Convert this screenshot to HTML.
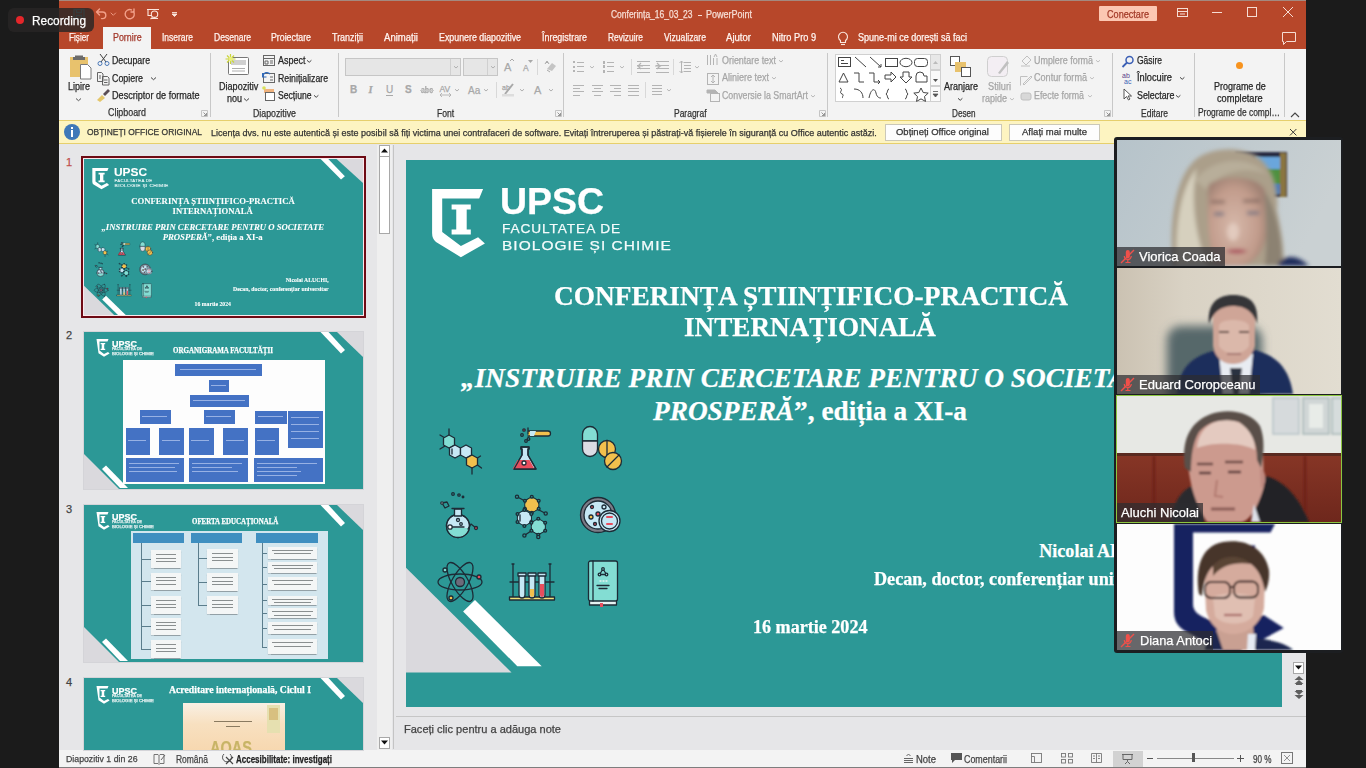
<!DOCTYPE html>
<html><head><meta charset="utf-8">
<style>
*{margin:0;padding:0;box-sizing:border-box}
html,body{width:1366px;height:768px;overflow:hidden;background:#1b1b1b;font-family:"Liberation Sans",sans-serif;position:relative}
.a{position:absolute}
.t{position:absolute;white-space:nowrap;line-height:1;-webkit-text-stroke:0.25px currentColor}
</style></head><body>
<div class="a" style="left:59px;top:0px;width:1247px;height:768px;background:#e6e6e8;"></div>
<div class="a" style="left:59px;top:0px;width:1247px;height:49px;background:#b7472a;"></div>
<div class="a" style="left:59px;top:0px;width:1247px;height:1px;background:#a4897f;"></div>
<svg class="a" style="left:59px;top:0" width="140" height="27" viewBox="0 0 140 27">
      <g fill="none" stroke="#6fa0a0" stroke-width="1.3"><rect x="15" y="9.5" width="10" height="9"/><path d="M17.5 9.5 v3 h5 v-3 M17.5 18.5 v-3 h5 v3"/></g>
      <g fill="none" stroke="#f2a08a" stroke-width="1.4" stroke-linecap="round">
        <path d="M37.5 12 l3 -3 M37.5 12 l3 3 M37.5 12 h6 a3.3 3.3 0 0 1 0 6.6 h-1"/>
        <path d="M52 13 l2.3 2.3 l2.3 -2.3" stroke-width="0.9"/>
        <path d="M74.5 11.5 a4.6 4.6 0 1 1 -2 -1.6 M75 9 v3 h-3"/>
      </g>
      <g fill="none" stroke="#fbe6dd" stroke-width="1.1">
        <path d="M88 9.5 h12 M89 9.5 v6 h3"/><circle cx="95.5" cy="14.2" r="3.2"/><path d="M92 18.5 h7 M93.5 17.5 l-2 1.5"/>
      </g>
      <path d="M113 12.5 h5 M113 14 l2.5 2.5 l2.5 -2.5 z" stroke="#fbe6dd" fill="#fbe6dd" stroke-width="0.9"/>
    </svg>
<div class="t" style="left:611.00px;top:10.13px;font-size:10px;color:#f6ddd4;font-family:'Liberation Sans',sans-serif;transform:scaleX(0.8472);transform-origin:0 0;">Conferința_16_03_23</div>
<div class="a" style="left:697.5px;top:14.5px;width:4px;height:1px;background:#f6ddd4;"></div>
<div class="t" style="left:705.70px;top:10.13px;font-size:10px;color:#f6ddd4;font-family:'Liberation Sans',sans-serif;transform:scaleX(0.8995);transform-origin:0 0;">PowerPoint</div>
<div class="a" style="left:1099px;top:6px;width:58px;height:15px;background:#fcc7b2;border-radius:1px"></div>
<div class="t" style="left:1107.00px;top:9.54px;font-size:10px;color:#a33a28;font-family:'Liberation Sans',sans-serif;transform:scaleX(0.9103);transform-origin:0 0;">Conectare</div>
<svg class="a" style="left:1160px;top:0" width="146" height="49" viewBox="0 0 146 49">
      <g fill="none" stroke="#f6ddd4" stroke-width="1">
        <rect x="17.5" y="8.5" width="10" height="8"/><path d="M17.5 11.5 h10 M20 14 h5"/>
        <path d="M52 12.5 h10"/>
        <rect x="87.5" y="7.5" width="9" height="9"/>
        <path d="M123 7 l10 10 M133 7 l-10 10"/>
        <path d="M122.5 32.5 h13 v9 h-9 l-3 3 v-3 h-1 z"/>
      </g>
    </svg>
<div class="a" style="left:103px;top:27px;width:48px;height:22px;background:#f3f3f3;"></div>
<div class="t" style="left:112.80px;top:33.14px;font-size:10px;color:#a3382a;font-family:'Liberation Sans',sans-serif;transform:scaleX(0.8871);transform-origin:0 0;">Pornire</div>
<div class="t" style="left:69.00px;top:33.14px;font-size:10px;color:#fff4f0;font-family:'Liberation Sans',sans-serif;transform:scaleX(0.8182);transform-origin:0 0;">Fișier</div>
<div class="t" style="left:162.00px;top:33.14px;font-size:10px;color:#fff4f0;font-family:'Liberation Sans',sans-serif;transform:scaleX(0.8450);transform-origin:0 0;">Inserare</div>
<div class="t" style="left:214.00px;top:33.14px;font-size:10px;color:#fff4f0;font-family:'Liberation Sans',sans-serif;transform:scaleX(0.8533);transform-origin:0 0;">Desenare</div>
<div class="t" style="left:271.00px;top:33.14px;font-size:10px;color:#fff4f0;font-family:'Liberation Sans',sans-serif;transform:scaleX(0.8776);transform-origin:0 0;">Proiectare</div>
<div class="t" style="left:332.00px;top:33.14px;font-size:10px;color:#fff4f0;font-family:'Liberation Sans',sans-serif;transform:scaleX(0.8950);transform-origin:0 0;">Tranziții</div>
<div class="t" style="left:384.00px;top:33.14px;font-size:10px;color:#fff4f0;font-family:'Liberation Sans',sans-serif;transform:scaleX(0.9559);transform-origin:0 0;">Animații</div>
<div class="t" style="left:439.00px;top:33.14px;font-size:10px;color:#fff4f0;font-family:'Liberation Sans',sans-serif;transform:scaleX(0.8832);transform-origin:0 0;">Expunere diapozitive</div>
<div class="t" style="left:542.00px;top:33.14px;font-size:10px;color:#fff4f0;font-family:'Liberation Sans',sans-serif;transform:scaleX(0.8897);transform-origin:0 0;">Înregistrare</div>
<div class="t" style="left:608.00px;top:33.14px;font-size:10px;color:#fff4f0;font-family:'Liberation Sans',sans-serif;transform:scaleX(0.8397);transform-origin:0 0;">Revizuire</div>
<div class="t" style="left:664.00px;top:33.14px;font-size:10px;color:#fff4f0;font-family:'Liberation Sans',sans-serif;transform:scaleX(0.8618);transform-origin:0 0;">Vizualizare</div>
<div class="t" style="left:726.00px;top:33.14px;font-size:10px;color:#fff4f0;font-family:'Liberation Sans',sans-serif;transform:scaleX(0.9570);transform-origin:0 0;">Ajutor</div>
<div class="t" style="left:772.00px;top:33.14px;font-size:10px;color:#fff4f0;font-family:'Liberation Sans',sans-serif;transform:scaleX(0.9206);transform-origin:0 0;">Nitro Pro 9</div>
<div class="t" style="left:858.00px;top:33.14px;font-size:10px;color:#fff4f0;font-family:'Liberation Sans',sans-serif;transform:scaleX(0.9037);transform-origin:0 0;">Spune-mi ce dorești să faci</div>
<svg class="a" style="left:836px;top:30px" width="14" height="16" viewBox="0 0 14 16"><g fill="none" stroke="#fbe6dd" stroke-width="1.1">
      <path d="M4.5 10.5 a4.5 4.5 0 1 1 5 0 v2 h-5 z"/><path d="M5 14.5 h4"/></g></svg>
<div class="a" style="left:59px;top:49px;width:1247px;height:71px;background:#f3f3f3;"></div>
<div class="a" style="left:210px;top:53px;width:1px;height:64px;background:#c8c8c8;"></div>
<div class="a" style="left:338px;top:53px;width:1px;height:64px;background:#c8c8c8;"></div>
<div class="a" style="left:563px;top:53px;width:1px;height:64px;background:#c8c8c8;"></div>
<div class="a" style="left:827px;top:53px;width:1px;height:64px;background:#c8c8c8;"></div>
<div class="a" style="left:1112px;top:53px;width:1px;height:64px;background:#c8c8c8;"></div>
<div class="a" style="left:1194px;top:53px;width:1px;height:64px;background:#c8c8c8;"></div>
<div class="a" style="left:1284px;top:53px;width:1px;height:64px;background:#c8c8c8;"></div>
<div class="a" style="left:59px;top:120px;width:1247px;height:24px;background:#fdf4c1;"></div>
<div class="a" style="left:59px;top:120px;width:1247px;height:1px;background:#e6cf6c;"></div>
<div class="a" style="left:59px;top:143px;width:1247px;height:1px;background:#e6cf6c;"></div>
<div class="a" style="left:59px;top:750px;width:1247px;height:17px;background:#f3f3f3;"></div>
<div class="a" style="left:59px;top:767px;width:1247px;height:1px;background:#7d7d7d;"></div>
<svg class="a" style="left:66px;top:54px" width="30" height="28" viewBox="0 0 30 28">
      <rect x="4" y="3" width="18" height="20" fill="#e8c26d"/>
      <path d="M9 3 v-1.5 h8 v1.5 h2 v3 h-12 v-3z" fill="#6b6b6b"/>
      <path d="M14.5 10.5 h7 l3.5 3.5 v11 h-10.5 z" fill="#fff" stroke="#7a7a7a" stroke-width="1"/>
    </svg>
<div class="t" style="left:67.50px;top:81.73px;font-size:10px;color:#262626;font-family:'Liberation Sans',sans-serif;transform:scaleX(0.8995);transform-origin:0 0;">Lipire</div>
<svg class="a" style="left:74.5px;top:96.5px" width="7.0" height="5.0" viewBox="0 0 7.0 5.0"><path d="M1 1.5 l2.5 2.2 l2.5 -2.2" fill="none" stroke="#555" stroke-width="1"/></svg>
<svg class="a" style="left:96px;top:53px" width="16" height="50" viewBox="0 0 16 50">
      <g fill="none" stroke="#3e3e3e" stroke-width="1"><path d="M4 1 l6 8 M11 1 l-6 8"/></g>
      <g fill="none" stroke="#4a78b8" stroke-width="1"><circle cx="4" cy="10.5" r="2"/><circle cx="11" cy="10.5" r="2"/></g>
      <g fill="none" stroke="#555" stroke-width="0.9"><path d="M1.5 19.5 h4 l1.5 1.5 v7.5 h-5.5z M3 23 h2 M3 25 h2"/><path d="M6.5 23.5 h5 l1.5 1.5 v7 h-6.5z M8 27 h3.5 M8 29.5 h3.5"/></g>
      <path d="M1 47 l5 -5 l3 3 l-5 4z" fill="#e4c66a"/><path d="M7 41 l5 -5 l2 2 l-5 5z" fill="#5a4e56"/>
    </svg>
<div class="t" style="left:112.00px;top:55.94px;font-size:10px;color:#262626;font-family:'Liberation Sans',sans-serif;transform:scaleX(0.8764);transform-origin:0 0;">Decupare</div>
<div class="t" style="left:112.00px;top:73.53px;font-size:10px;color:#262626;font-family:'Liberation Sans',sans-serif;transform:scaleX(0.8852);transform-origin:0 0;">Copiere</div>
<svg class="a" style="left:149.5px;top:75.5px" width="7.0" height="5.0" viewBox="0 0 7.0 5.0"><path d="M1 1.5 l2.5 2.2 l2.5 -2.2" fill="none" stroke="#444" stroke-width="1"/></svg>
<div class="t" style="left:112.00px;top:90.73px;font-size:10px;color:#262626;font-family:'Liberation Sans',sans-serif;transform:scaleX(0.9100);transform-origin:0 0;">Descriptor de formate</div>
<div class="t" style="left:108.20px;top:108.23px;font-size:10px;color:#333;font-family:'Liberation Sans',sans-serif;transform:scaleX(0.8878);transform-origin:0 0;">Clipboard</div>
<svg class="a" style="left:201px;top:110px" width="7" height="7" viewBox="0 0 7 7"><path d="M0.5 6.5 v-6 h6 v6 z" fill="none" stroke="#c4c4c4" stroke-width="1"/><path d="M2.5 2.5 l3 3 M3 5.5 h2.5 v-2.5" fill="none" stroke="#8a8a8a" stroke-width="0.9"/></svg>
<svg class="a" style="left:224px;top:53px" width="30" height="25" viewBox="0 0 30 25">
      <rect x="4.5" y="4.5" width="20" height="17" rx="1" fill="#fff" stroke="#777" stroke-width="1"/>
      <rect x="7" y="7" width="15" height="5" fill="#d0d0d0"/>
      <path d="M8 15.5 h13 M8 18 h13" stroke="#999" stroke-width="0.8"/>
      <g stroke="#c9d43a" stroke-width="1.2"><path d="M6.5 1 v10 M1.5 6 h10 M3 2.5 l7 7 M10 2.5 l-7 7"/></g>
      <circle cx="6.5" cy="6" r="2.3" fill="#eaf07a"/>
    </svg>
<div class="t" style="left:218.80px;top:81.53px;font-size:10px;color:#262626;font-family:'Liberation Sans',sans-serif;transform:scaleX(0.9066);transform-origin:0 0;">Diapozitiv</div>
<div class="t" style="left:227.00px;top:93.73px;font-size:10px;color:#262626;font-family:'Liberation Sans',sans-serif;transform:scaleX(0.8990);transform-origin:0 0;">nou</div>
<svg class="a" style="left:242.5px;top:96.5px" width="7.0" height="5.0" viewBox="0 0 7.0 5.0"><path d="M1 1.5 l2.5 2.2 l2.5 -2.2" fill="none" stroke="#444" stroke-width="1"/></svg>
<svg class="a" style="left:262px;top:54px" width="15" height="50" viewBox="0 0 15 50">
      <g fill="none" stroke="#666" stroke-width="1"><rect x="1.5" y="1.5" width="11" height="10"/><path d="M1.5 4.5 h11 M3 7 h3 v3 h-3z M8 7 h3 M8 9 h3"/></g>
      <g fill="none" stroke="#666" stroke-width="1"><rect x="1.5" y="19.5" width="11" height="9"/><path d="M8 23 h3 M8 26 h3"/></g>
      <path d="M1 22 a4 4 0 0 1 7 -2" fill="none" stroke="#2f6bbf" stroke-width="1.3"/><path d="M0.5 19 v4 h4" fill="none" stroke="#2f6bbf" stroke-width="1.2"/>
      <rect x="2" y="35" width="10" height="4" fill="#f0b37e"/><rect x="3.5" y="38.5" width="9" height="8" fill="#fff" stroke="#666" stroke-width="1"/>
      <circle cx="2" cy="34" r="1.8" fill="#d8e05a"/>
    </svg>
<div class="t" style="left:277.60px;top:55.94px;font-size:10px;color:#262626;font-family:'Liberation Sans',sans-serif;transform:scaleX(0.8995);transform-origin:0 0;">Aspect</div>
<svg class="a" style="left:305.8px;top:58.8px" width="6.4" height="4.4" viewBox="0 0 6.4 4.4"><path d="M1 1.3 l2.2 2.0 l2.2 -2.0" fill="none" stroke="#444" stroke-width="1"/></svg>
<div class="t" style="left:277.60px;top:73.73px;font-size:10px;color:#262626;font-family:'Liberation Sans',sans-serif;transform:scaleX(0.8734);transform-origin:0 0;">Reinițializare</div>
<div class="t" style="left:277.60px;top:90.84px;font-size:10px;color:#262626;font-family:'Liberation Sans',sans-serif;transform:scaleX(0.8608);transform-origin:0 0;">Secțiune</div>
<svg class="a" style="left:312.8px;top:93.8px" width="6.4" height="4.4" viewBox="0 0 6.4 4.4"><path d="M1 1.3 l2.2 2.0 l2.2 -2.0" fill="none" stroke="#444" stroke-width="1"/></svg>
<div class="t" style="left:253.20px;top:108.53px;font-size:10px;color:#333;font-family:'Liberation Sans',sans-serif;transform:scaleX(0.8791);transform-origin:0 0;">Diapozitive</div>
<div class="a" style="left:345px;top:58px;width:116px;height:18px;background:#e6e6e6;border:1px solid #c6c6c6"></div>
<div class="a" style="left:450px;top:59px;width:1px;height:16px;background:#d0d0d0;"></div>
<svg class="a" style="left:452.5px;top:65px" width="6" height="4" viewBox="0 0 6 4"><path d="M1 1.2 l2 1.8 l2 -1.8" fill="none" stroke="#b0b0b0" stroke-width="1"/></svg>
<div class="a" style="left:463px;top:58px;width:35px;height:18px;background:#e6e6e6;border:1px solid #c6c6c6"></div>
<div class="a" style="left:487px;top:59px;width:1px;height:16px;background:#d0d0d0;"></div>
<svg class="a" style="left:489.5px;top:65px" width="6" height="4" viewBox="0 0 6 4"><path d="M1 1.2 l2 1.8 l2 -1.8" fill="none" stroke="#b0b0b0" stroke-width="1"/></svg>
<div class="t" style="left:504.00px;top:62.09px;font-size:11px;color:#a8a8a8;font-family:'Liberation Sans',sans-serif;">A</div>
<div class="t" style="left:523.00px;top:64.20px;font-size:8.5px;color:#a8a8a8;font-family:'Liberation Sans',sans-serif;">A</div>
<svg class="a" style="left:510px;top:58px" width="4" height="4"><path d="M0 3 l2 -2 l2 2" fill="none" stroke="#a8a8a8" stroke-width="1"/></svg>
<svg class="a" style="left:528px;top:60px" width="5" height="4"><path d="M0 0 h5 l-2.5 3z" fill="#a8a8a8"/></svg>
<div class="a" style="left:537px;top:59px;width:1px;height:16px;background:#d8d8d8;"></div>
<svg class="a" style="left:544px;top:60px" width="13" height="13" viewBox="0 0 13 13"><path d="M3 9 l5 -6 l4 3 l-4 5z" fill="#c4c4c4"/><path d="M1 4 l2 -3 l2 3 M2 2.5 h2" fill="none" stroke="#a8a8a8" stroke-width="1"/><path d="M3 10 l3 2" stroke="#a8a8a8"/></svg>
<div class="t" style="left:350.00px;top:84.94px;font-size:10px;color:#a8a8a8;font-family:'Liberation Sans',sans-serif;font-weight:bold;">B</div>
<div class="t" style="left:368.50px;top:84.61px;font-size:10.5px;color:#a8a8a8;font-family:'Liberation Serif',serif;font-weight:bold;font-style:italic;">I</div>
<div class="t" style="left:386.00px;top:84.94px;font-size:10px;color:#a8a8a8;font-family:'Liberation Sans',sans-serif;">U</div>
<div class="a" style="left:386px;top:94.5px;width:7px;height:1px;background:#a8a8a8;"></div>
<div class="t" style="left:405.00px;top:84.94px;font-size:10px;color:#a8a8a8;font-family:'Liberation Sans',sans-serif;font-weight:bold;">S</div>
<div class="t" style="left:421.00px;top:86.20px;font-size:8.5px;color:#a8a8a8;font-family:'Liberation Sans',sans-serif;font-weight:bold;transform:scaleX(0.8193);transform-origin:0 0;">abc</div>
<div class="a" style="left:420px;top:90px;width:14px;height:1px;background:#c8c8c8;"></div>
<div class="t" style="left:439.50px;top:85.20px;font-size:8.5px;color:#a8a8a8;font-family:'Liberation Sans',sans-serif;">AV</div>
<svg class="a" style="left:439px;top:92px" width="13" height="6" viewBox="0 0 13 6"><path d="M1 3 h11 M1 3 l2 -2 M1 3 l2 2 M12 3 l-2 -2 M12 3 l-2 2" fill="none" stroke="#a8a8a8" stroke-width="0.8"/></svg>
<svg class="a" style="left:454px;top:88px" width="6" height="4" viewBox="0 0 6 4"><path d="M1 1.2 l2 1.8 l2 -1.8" fill="none" stroke="#b0b0b0" stroke-width="1"/></svg>
<div class="t" style="left:468.00px;top:85.94px;font-size:10px;color:#a8a8a8;font-family:'Liberation Sans',sans-serif;">Aa</div>
<svg class="a" style="left:483px;top:88px" width="6" height="4" viewBox="0 0 6 4"><path d="M1 1.2 l2 1.8 l2 -1.8" fill="none" stroke="#b0b0b0" stroke-width="1"/></svg>
<div class="a" style="left:496px;top:82px;width:1px;height:16px;background:#d8d8d8;"></div>
<div class="t" style="left:502.00px;top:84.47px;font-size:7px;color:#a8a8a8;font-family:'Liberation Sans',sans-serif;">ab</div>
<svg class="a" style="left:501px;top:83px" width="15" height="14" viewBox="0 0 15 14"><path d="M4 11 l8 -10" stroke="#a8a8a8" stroke-width="2"/><rect x="1" y="11" width="12" height="2.5" fill="#ddd"/></svg>
<svg class="a" style="left:519px;top:88px" width="6" height="4" viewBox="0 0 6 4"><path d="M1 1.2 l2 1.8 l2 -1.8" fill="none" stroke="#b0b0b0" stroke-width="1"/></svg>
<div class="t" style="left:534.00px;top:85.09px;font-size:11px;color:#a8a8a8;font-family:'Liberation Sans',sans-serif;">A</div>
<svg class="a" style="left:548px;top:88px" width="6" height="4" viewBox="0 0 6 4"><path d="M1 1.2 l2 1.8 l2 -1.8" fill="none" stroke="#b0b0b0" stroke-width="1"/></svg>
<div class="t" style="left:436.60px;top:108.53px;font-size:10px;color:#333;font-family:'Liberation Sans',sans-serif;transform:scaleX(0.8596);transform-origin:0 0;">Font</div>
<svg class="a" style="left:555px;top:110px" width="7" height="7" viewBox="0 0 7 7"><path d="M0.5 6.5 v-6 h6 v6 z" fill="none" stroke="#c4c4c4" stroke-width="1"/><path d="M2.5 2.5 l3 3 M3 5.5 h2.5 v-2.5" fill="none" stroke="#8a8a8a" stroke-width="0.9"/></svg>
<div class="a" style="left:577px;top:61.5px;width:7px;height:1px;background:#b4b4b4;"></div><div class="a" style="left:577px;top:66.0px;width:7px;height:1px;background:#b4b4b4;"></div><div class="a" style="left:577px;top:70.5px;width:7px;height:1px;background:#b4b4b4;"></div>
<div class="a" style="left:573px;top:61.0px;width:2px;height:2px;background:#b4b4b4;"></div><div class="a" style="left:573px;top:65.5px;width:2px;height:2px;background:#b4b4b4;"></div><div class="a" style="left:573px;top:70.0px;width:2px;height:2px;background:#b4b4b4;"></div>
<svg class="a" style="left:589px;top:65px" width="6" height="4" viewBox="0 0 6 4"><path d="M1 1.2 l2 1.8 l2 -1.8" fill="none" stroke="#b8b8b8" stroke-width="1"/></svg>
<div class="a" style="left:607px;top:61.5px;width:7px;height:1px;background:#b4b4b4;"></div><div class="a" style="left:607px;top:66.0px;width:7px;height:1px;background:#b4b4b4;"></div><div class="a" style="left:607px;top:70.5px;width:7px;height:1px;background:#b4b4b4;"></div>
<div class="a" style="left:603px;top:60.5px;width:2px;height:3px;background:#b4b4b4;"></div><div class="a" style="left:603px;top:65.0px;width:2px;height:3px;background:#b4b4b4;"></div><div class="a" style="left:603px;top:69.5px;width:2px;height:3px;background:#b4b4b4;"></div>
<svg class="a" style="left:619px;top:65px" width="6" height="4" viewBox="0 0 6 4"><path d="M1 1.2 l2 1.8 l2 -1.8" fill="none" stroke="#b8b8b8" stroke-width="1"/></svg>
<div class="a" style="left:631px;top:59px;width:1px;height:16px;background:#d8d8d8;"></div>
<div class="a" style="left:637px;top:61.0px;width:13px;height:1px;background:#b4b4b4;"></div><div class="a" style="left:637px;top:64.7px;width:13px;height:1px;background:#b4b4b4;"></div><div class="a" style="left:637px;top:68.4px;width:13px;height:1px;background:#b4b4b4;"></div><div class="a" style="left:637px;top:72.1px;width:13px;height:1px;background:#b4b4b4;"></div>
<svg class="a" style="left:637px;top:62px" width="7" height="8"><path d="M6 4 h-5 l3 -3 M1 4 l3 3" fill="none" stroke="#b4b4b4" stroke-width="1.2"/></svg>
<div class="a" style="left:656px;top:61.0px;width:13px;height:1px;background:#b4b4b4;"></div><div class="a" style="left:656px;top:64.7px;width:13px;height:1px;background:#b4b4b4;"></div><div class="a" style="left:656px;top:68.4px;width:13px;height:1px;background:#b4b4b4;"></div><div class="a" style="left:656px;top:72.1px;width:13px;height:1px;background:#b4b4b4;"></div>
<svg class="a" style="left:655px;top:62px" width="7" height="8"><path d="M0 4 h5 l-3 -3 M5 4 l-3 3" fill="none" stroke="#b4b4b4" stroke-width="1.2"/></svg>
<div class="a" style="left:673px;top:59px;width:1px;height:16px;background:#d8d8d8;"></div>
<div class="a" style="left:684px;top:62px;width:7px;height:1px;background:#b4b4b4;"></div><div class="a" style="left:684px;top:65px;width:7px;height:1px;background:#b4b4b4;"></div><div class="a" style="left:684px;top:68px;width:7px;height:1px;background:#b4b4b4;"></div><div class="a" style="left:684px;top:71px;width:7px;height:1px;background:#b4b4b4;"></div>
<svg class="a" style="left:679px;top:60px" width="5" height="14"><path d="M2.5 1 v12 M0.5 3 l2 -2 l2 2 M0.5 11 l2 2 l2 -2" fill="none" stroke="#b4b4b4" stroke-width="1"/></svg>
<svg class="a" style="left:694px;top:65px" width="6" height="4" viewBox="0 0 6 4"><path d="M1 1.2 l2 1.8 l2 -1.8" fill="none" stroke="#b8b8b8" stroke-width="1"/></svg>
<div class="a" style="left:573px;top:85.0px;width:11px;height:1px;background:#b4b4b4;"></div>
<div class="a" style="left:573px;top:88.2px;width:7px;height:1px;background:#b4b4b4;"></div>
<div class="a" style="left:573px;top:91.4px;width:11px;height:1px;background:#b4b4b4;"></div>
<div class="a" style="left:573px;top:94.6px;width:7px;height:1px;background:#b4b4b4;"></div>
<div class="a" style="left:592.0px;top:85.0px;width:11px;height:1px;background:#b4b4b4;"></div>
<div class="a" style="left:594.0px;top:88.2px;width:7px;height:1px;background:#b4b4b4;"></div>
<div class="a" style="left:592.0px;top:91.4px;width:11px;height:1px;background:#b4b4b4;"></div>
<div class="a" style="left:594.0px;top:94.6px;width:7px;height:1px;background:#b4b4b4;"></div>
<div class="a" style="left:610px;top:85.0px;width:11px;height:1px;background:#b4b4b4;"></div>
<div class="a" style="left:614px;top:88.2px;width:7px;height:1px;background:#b4b4b4;"></div>
<div class="a" style="left:610px;top:91.4px;width:11px;height:1px;background:#b4b4b4;"></div>
<div class="a" style="left:614px;top:94.6px;width:7px;height:1px;background:#b4b4b4;"></div>
<div class="a" style="left:628px;top:85.0px;width:11px;height:1px;background:#b4b4b4;"></div>
<div class="a" style="left:628px;top:88.2px;width:11px;height:1px;background:#b4b4b4;"></div>
<div class="a" style="left:628px;top:91.4px;width:11px;height:1px;background:#b4b4b4;"></div>
<div class="a" style="left:628px;top:94.6px;width:11px;height:1px;background:#b4b4b4;"></div>
<div class="a" style="left:645px;top:82px;width:1px;height:16px;background:#d8d8d8;"></div>
<div class="a" style="left:652px;top:85px;width:10px;height:1px;background:#b4b4b4;"></div><div class="a" style="left:652px;top:88px;width:10px;height:1px;background:#b4b4b4;"></div><div class="a" style="left:652px;top:91px;width:10px;height:1px;background:#b4b4b4;"></div><div class="a" style="left:652px;top:94px;width:10px;height:1px;background:#b4b4b4;"></div>
<svg class="a" style="left:666px;top:88px" width="6" height="4" viewBox="0 0 6 4"><path d="M1 1.2 l2 1.8 l2 -1.8" fill="none" stroke="#b8b8b8" stroke-width="1"/></svg>
<div class="t" style="left:673.80px;top:108.53px;font-size:10px;color:#333;font-family:'Liberation Sans',sans-serif;transform:scaleX(0.8473);transform-origin:0 0;">Paragraf</div>
<svg class="a" style="left:819px;top:110px" width="7" height="7" viewBox="0 0 7 7"><path d="M0.5 6.5 v-6 h6 v6 z" fill="none" stroke="#c4c4c4" stroke-width="1"/><path d="M2.5 2.5 l3 3 M3 5.5 h2.5 v-2.5" fill="none" stroke="#8a8a8a" stroke-width="0.9"/></svg>
<svg class="a" style="left:706px;top:54px" width="14" height="50" viewBox="0 0 14 50"><g fill="none" stroke="#b4b4b4" stroke-width="1">
      <path d="M1.5 1 v10 M4.5 1 v10 M7.5 4 v7 M11 4 v7 M8 3 l1.5 -3 l1.5 3"/>
      <rect x="1.5" y="19.5" width="11" height="11"/><path d="M7 21 v8 M5 23 l2 -2 l2 2 M5 27 l2 2 l2 -2"/>
      <path d="M1 36 h8 l3 3 h-11z" fill="#b4b4b4"/><rect x="4.5" y="39.5" width="9" height="8"/></g></svg>
<div class="t" style="left:721.60px;top:55.53px;font-size:10px;color:#a6a6a6;font-family:'Liberation Sans',sans-serif;transform:scaleX(0.8914);transform-origin:0 0;">Orientare text</div>
<svg class="a" style="left:778px;top:59px" width="6" height="4" viewBox="0 0 6 4"><path d="M1 1.2 l2 1.8 l2 -1.8" fill="none" stroke="#b8b8b8" stroke-width="1"/></svg>
<div class="t" style="left:721.60px;top:73.14px;font-size:10px;color:#a6a6a6;font-family:'Liberation Sans',sans-serif;transform:scaleX(0.8996);transform-origin:0 0;">Aliniere text</div>
<svg class="a" style="left:771px;top:76px" width="6" height="4" viewBox="0 0 6 4"><path d="M1 1.2 l2 1.8 l2 -1.8" fill="none" stroke="#b8b8b8" stroke-width="1"/></svg>
<div class="t" style="left:721.60px;top:90.84px;font-size:10px;color:#a6a6a6;font-family:'Liberation Sans',sans-serif;transform:scaleX(0.8792);transform-origin:0 0;">Conversie la SmartArt</div>
<svg class="a" style="left:810px;top:94px" width="6" height="4" viewBox="0 0 6 4"><path d="M1 1.2 l2 1.8 l2 -1.8" fill="none" stroke="#b8b8b8" stroke-width="1"/></svg>
<div class="a" style="left:835px;top:54px;width:106px;height:48px;background:#ffffff;border:1px solid #d0d0d0"></div>
<div class="a" style="left:930px;top:54px;width:11px;height:16px;background:#e8e8e8;border:1px solid #d0d0d0"></div>
<div class="a" style="left:930px;top:70px;width:11px;height:16px;background:#fafafa;border:1px solid #d0d0d0"></div>
<div class="a" style="left:930px;top:86px;width:11px;height:16px;background:#fafafa;border:1px solid #d0d0d0"></div>
<svg class="a" style="left:835px;top:54px" width="106" height="48" viewBox="0 0 106 48">
      <g fill="none" stroke="#444" stroke-width="1">
        <rect x="3.5" y="3.5" width="12" height="9"/><path d="M6 6.5 h3 M6 9.5 h7"/>
        <path d="M20 3 l11 10"/><path d="M35 3 l11 10 M46 13 v-3 M46 13 h-3"/>
        <rect x="50.5" y="4.5" width="12" height="8"/>
        <ellipse cx="71" cy="8.5" rx="6" ry="4.2"/>
        <rect x="79.5" y="4.5" width="13" height="8" rx="3"/>
        <path d="M4 28 l4.5 -9 l4.5 9z"/>
        <path d="M19 19 h5 v9 h5"/><path d="M34 19 h5 v9 h6 M43 26 l2 2 l-2 2"/>
        <path d="M50 21 h6 v-3 l5 5 l-5 5 v-3 h-6z"/>
        <path d="M68 18 h6 v5 h3 l-6 6 l-6 -6 h3z"/>
        <path d="M81 28 v-6 a4 4 0 0 1 8 0 h3 v6z"/>
        <path d="M5 34 c4 2 -2 4 2 6 c3 1 -1 3 1 4"/>
        <path d="M19 35 c6 0 9 4 9 9"/><path d="M34 44 c2 -10 6 -10 7 -5 c1 5 4 5 5 5"/>
        <path d="M54 35 c-2 0 -1 4 -3 5 c2 1 1 5 3 5"/><path d="M70 35 c2 0 1 4 3 5 c-2 1 -1 5 -3 5"/>
        <path d="M86 34 l2.2 4.5 l5 0.6 l-3.7 3.4 l1 4.9 l-4.5 -2.5 l-4.5 2.5 l1 -4.9 l-3.7 -3.4 l5 -0.6z"/>
      </g></svg>
<svg class="a" style="left:930px;top:54px" width="11" height="48" viewBox="0 0 11 48"><path d="M3 10 l2.5 -3 l2.5 3z" fill="#bbb"/><path d="M3 25 l2.5 3 l2.5 -3z" fill="#555"/><path d="M3 37.5 h5 M3 40 l2.5 3 l2.5 -3z" stroke="#555" fill="#555" stroke-width="0.8"/></svg>
<svg class="a" style="left:948px;top:54px" width="26" height="24" viewBox="0 0 26 24">
      <rect x="2.5" y="2.5" width="9" height="9" fill="#fff" stroke="#555"/>
      <rect x="7" y="8" width="11" height="10" fill="#e8c26d"/>
      <rect x="13.5" y="13.5" width="9" height="9" fill="#fff" stroke="#555"/>
    </svg>
<div class="t" style="left:944.00px;top:82.03px;font-size:10px;color:#262626;font-family:'Liberation Sans',sans-serif;transform:scaleX(0.8995);transform-origin:0 0;">Aranjare</div>
<svg class="a" style="left:957.3px;top:96.8px" width="6.4" height="4.4" viewBox="0 0 6.4 4.4"><path d="M1 1.3 l2.2 2.0 l2.2 -2.0" fill="none" stroke="#444" stroke-width="1"/></svg>
<svg class="a" style="left:986px;top:55px" width="26" height="24" viewBox="0 0 26 24">
      <rect x="1.5" y="1.5" width="20" height="20" rx="4" fill="#f3eef3" stroke="#cfcfcf"/>
      <path d="M12 18 l9 -12 l2 2 l-9 11z" fill="#c0c0c0"/>
    </svg>
<div class="t" style="left:987.50px;top:82.03px;font-size:10px;color:#a6a6a6;font-family:'Liberation Sans',sans-serif;transform:scaleX(0.9198);transform-origin:0 0;">Stiluri</div>
<div class="t" style="left:982.00px;top:93.53px;font-size:10px;color:#a6a6a6;font-family:'Liberation Sans',sans-serif;transform:scaleX(0.8993);transform-origin:0 0;">rapide</div>
<svg class="a" style="left:1009px;top:97px" width="6" height="4" viewBox="0 0 6 4"><path d="M1 1.2 l2 1.8 l2 -1.8" fill="none" stroke="#c0c0c0" stroke-width="1"/></svg>
<svg class="a" style="left:1019px;top:54px" width="14" height="50" viewBox="0 0 14 50"><g fill="none" stroke="#c0c0c0" stroke-width="1">
      <path d="M3 7 l5 -5 l4 4 l-5 5z M2 12 h9"/>
      <path d="M1.5 31.5 v-9 h7 M4 30 l8 -8 l1 1 l-8 8z"/>
      <rect x="2" y="39" width="10" height="7" rx="2" fill="#d8d8d8"/></g></svg>
<div class="t" style="left:1034.00px;top:55.53px;font-size:10px;color:#a6a6a6;font-family:'Liberation Sans',sans-serif;transform:scaleX(0.8922);transform-origin:0 0;">Umplere formă</div>
<svg class="a" style="left:1095px;top:59px" width="6" height="4" viewBox="0 0 6 4"><path d="M1 1.2 l2 1.8 l2 -1.8" fill="none" stroke="#c0c0c0" stroke-width="1"/></svg>
<div class="t" style="left:1034.00px;top:73.14px;font-size:10px;color:#a6a6a6;font-family:'Liberation Sans',sans-serif;transform:scaleX(0.9082);transform-origin:0 0;">Contur formă</div>
<svg class="a" style="left:1089px;top:76px" width="6" height="4" viewBox="0 0 6 4"><path d="M1 1.2 l2 1.8 l2 -1.8" fill="none" stroke="#c0c0c0" stroke-width="1"/></svg>
<div class="t" style="left:1034.00px;top:90.84px;font-size:10px;color:#a6a6a6;font-family:'Liberation Sans',sans-serif;transform:scaleX(0.8820);transform-origin:0 0;">Efecte formă</div>
<svg class="a" style="left:1087px;top:94px" width="6" height="4" viewBox="0 0 6 4"><path d="M1 1.2 l2 1.8 l2 -1.8" fill="none" stroke="#c0c0c0" stroke-width="1"/></svg>
<div class="t" style="left:952.20px;top:108.53px;font-size:10px;color:#333;font-family:'Liberation Sans',sans-serif;transform:scaleX(0.8164);transform-origin:0 0;">Desen</div>
<svg class="a" style="left:1104px;top:110px" width="7" height="7" viewBox="0 0 7 7"><path d="M0.5 6.5 v-6 h6 v6 z" fill="none" stroke="#c4c4c4" stroke-width="1"/><path d="M2.5 2.5 l3 3 M3 5.5 h2.5 v-2.5" fill="none" stroke="#8a8a8a" stroke-width="0.9"/></svg>
<svg class="a" style="left:1121px;top:55px" width="14" height="48" viewBox="0 0 14 48">
      <circle cx="8.5" cy="5" r="3.5" fill="none" stroke="#3b5fb5" stroke-width="1.5"/><path d="M6 7.5 l-4.5 4.5" stroke="#3b5fb5" stroke-width="1.8"/>
      <text x="1" y="23" font-size="7" fill="#5b3d8a" font-family="Liberation Sans">ab</text>
      <text x="3" y="29" font-size="7" fill="#3b5fb5" font-family="Liberation Sans">ac</text>
      <path d="M3 34 v10 l2.5 -2.5 l2 3.5 l1.5 -1 l-2 -3 h3.5z" fill="#fff" stroke="#444" stroke-width="0.9"/>
    </svg>
<div class="t" style="left:1136.50px;top:55.53px;font-size:10px;color:#262626;font-family:'Liberation Sans',sans-serif;transform:scaleX(0.8488);transform-origin:0 0;">Găsire</div>
<div class="t" style="left:1136.50px;top:73.14px;font-size:10px;color:#262626;font-family:'Liberation Sans',sans-serif;transform:scaleX(0.9259);transform-origin:0 0;">Înlocuire</div>
<svg class="a" style="left:1178.8px;top:75.8px" width="6.4" height="4.4" viewBox="0 0 6.4 4.4"><path d="M1 1.3 l2.2 2.0 l2.2 -2.0" fill="none" stroke="#444" stroke-width="1"/></svg>
<div class="t" style="left:1136.50px;top:90.84px;font-size:10px;color:#262626;font-family:'Liberation Sans',sans-serif;transform:scaleX(0.8876);transform-origin:0 0;">Selectare</div>
<svg class="a" style="left:1174.8px;top:93.8px" width="6.4" height="4.4" viewBox="0 0 6.4 4.4"><path d="M1 1.3 l2.2 2.0 l2.2 -2.0" fill="none" stroke="#444" stroke-width="1"/></svg>
<div class="t" style="left:1140.60px;top:108.53px;font-size:10px;color:#333;font-family:'Liberation Sans',sans-serif;transform:scaleX(0.8521);transform-origin:0 0;">Editare</div>
<div class="a" style="left:1235.5px;top:62px;width:7px;height:7px;border-radius:50%;background:#f7931e"></div>
<div class="t" style="left:1213.70px;top:81.73px;font-size:10px;color:#262626;font-family:'Liberation Sans',sans-serif;transform:scaleX(0.8960);transform-origin:0 0;">Programe de</div>
<div class="t" style="left:1216.90px;top:93.64px;font-size:10px;color:#262626;font-family:'Liberation Sans',sans-serif;transform:scaleX(0.9238);transform-origin:0 0;">completare</div>
<div class="t" style="left:1198.20px;top:108.44px;font-size:10px;color:#333;font-family:'Liberation Sans',sans-serif;transform:scaleX(0.8410);transform-origin:0 0;">Programe de compl…</div>
<svg class="a" style="left:1290px;top:112px" width="10" height="6"><path d="M1 5 l4 -4 l4 4" fill="none" stroke="#444" stroke-width="1.1"/></svg>
<div class="t" style="left:66.00px;top:157.09px;font-size:11px;color:#c0504d;font-family:'Liberation Sans',sans-serif;">1</div>
<div class="t" style="left:66.00px;top:330.29px;font-size:11px;color:#444;font-family:'Liberation Sans',sans-serif;">2</div>
<div class="t" style="left:66.00px;top:503.69px;font-size:11px;color:#444;font-family:'Liberation Sans',sans-serif;">3</div>
<div class="t" style="left:66.00px;top:676.89px;font-size:11px;color:#444;font-family:'Liberation Sans',sans-serif;">4</div>
<div class="a" style="left:81px;top:156px;width:285px;height:162px;background:#6e0a14;"></div>
<div class="a" style="left:83px;top:158px;width:281px;height:158px;background:#fde8ec;"></div>
<div class="a" style="left:84px;top:159px;width:279px;height:156px;overflow:hidden"><div class="a" style="left:0;top:0;width:876px;height:547px;transform:scale(0.3185,0.311);transform-origin:0 0"><div class="a" style="left:0px;top:0px;width:876px;height:547px;background:#2c9896;"></div>
<svg class="a" style="left:0;top:0" width="876" height="547" viewBox="0 0 876 547">
      <polygon points="0,407.7 0,512.5 105.5,512.5" fill="#dad9dd"/>
      <polygon points="57.1,451.5 69,440 135.7,506.25 111.3,506.25" fill="#fff"/>
      <polygon points="793,0 876,0 876,77" fill="#dad9dd"/>
      <polygon points="743,0 767,0 819,55.6 807,66" fill="#fff"/>
    </svg>
<svg class="a" style="left:0;top:0" width="300" height="110" viewBox="0 0 300 110">
      <path d="M26.1 29 L77.1 29 L73.2 38.6 L36.2 38.6 L36.2 72 L54.9 86 L72.1 77.2 L78.9 83.4 L54.9 97.2 L30 82 Q26.1 79 26.1 73 Z" fill="#fff"/>
      <path d="M45.6 44.4 h19.2 v5.2 h-4.1 v19.8 h4.1 v5.2 h-19.2 v-5.2 h4.65 v-19.8 h-4.65 z" fill="#fff"/>
    </svg>
<div class="t" style="left:94.30px;top:23.63px;font-size:36px;color:#fff;font-family:'Liberation Sans',sans-serif;font-weight:bold;transform:scaleX(1.0398);transform-origin:0 0;">UPSC</div>
<div class="t" style="left:96.00px;top:62.19px;font-size:13.6px;color:#f4fbfb;font-family:'Liberation Sans',sans-serif;letter-spacing:0.9px;transform:scaleX(1.0063);transform-origin:0 0;">FACULTATEA DE</div>
<div class="t" style="left:96.00px;top:79.19px;font-size:13.6px;color:#f4fbfb;font-family:'Liberation Sans',sans-serif;letter-spacing:0.9px;transform:scaleX(1.1394);transform-origin:0 0;">BIOLOGIE ȘI CHIMIE</div>
<div class="t" style="left:148.00px;top:122.54px;font-size:27.3px;color:#ffffff;font-family:'Liberation Serif',serif;font-weight:bold;transform:scaleX(1.0010);transform-origin:0 0;">CONFERINȚA ȘTIINȚIFICO-PRACTICĂ</div>
<div class="t" style="left:278.30px;top:154.34px;font-size:27.3px;color:#ffffff;font-family:'Liberation Serif',serif;font-weight:bold;transform:scaleX(0.9947);transform-origin:0 0;">INTERNAȚIONALĂ</div>
<div class="t" style="left:55.00px;top:205.04px;font-size:27.3px;color:#ffffff;font-family:'Liberation Serif',serif;font-weight:bold;font-style:italic;">„INSTRUIRE PRIN CERCETARE PENTRU O SOCIETATE</div>
<div class="t" style="left:247.00px;top:238.04px;font-size:27.3px;color:#ffffff;font-family:'Liberation Serif',serif;font-weight:bold;font-style:italic;">PROSPERĂ</div>
<div class="t" style="left:388.09px;top:238.04px;font-size:27.3px;color:#ffffff;font-family:'Liberation Serif',serif;font-weight:bold;">”, ediția a XI-a</div>
<svg class="a" style="left:0;top:0" width="876" height="547" viewBox="0 0 876 547">
    <g stroke="#1d2b36" stroke-width="1.3" stroke-linejoin="round" stroke-linecap="round">
      <!-- icon1 molecule (center 54.5,289) -->
      <g transform="translate(32,265)">
        <path d="M11 4 v6 M2 10 l5 3 M2 24 l5 -3" fill="none"/>
        <polygon points="11,10 16.5,13 16.5,20 11,23 5.5,20 5.5,13" fill="#83ddd3"/>
        <polygon points="17,20 22.5,23 22.5,30 17,33 11.5,30 11.5,23" fill="#c6e8f5"/>
        <polygon points="28,20 33.5,23 33.5,30 28,33 22.5,30 22.5,23" fill="#c6e8f5"/>
        <polygon points="34,30 39.5,33 39.5,40 34,43 28.5,40 28.5,33" fill="#f2c04d"/>
        <path d="M34 43 v6 M39.5 40 l4 3 M39.5 33 l3 -2 M14 24 v5" fill="none"/>
      </g>
      <!-- icon2 flask + tube (center 125,289) -->
      <g transform="translate(104,265)">
        <path d="M11 22 h8 v2 h-1 v6 l8 14 h-22 l8 -14 v-6 h-1 z" fill="#c6e8f5"/>
        <path d="M7.5 35 l-5 9 h22 l-5 -9 z" fill="#e84e5e" stroke="none"/>
        <path d="M11 22 h8 v2 h-1 v6 l8 14 h-22 l8 -14 v-6 h-1 z" fill="none"/>
        <circle cx="14" cy="38" r="2" fill="#fff"/>
        <path d="M18 3 v6 M18 6 h20 a2.5 2.5 0 0 1 0 5 h-20" fill="#f2c04d"/>
        <path d="M20 6 h6 l-2 5 h-4z" fill="#c6e8f5" stroke="none"/>
        <circle cx="14" cy="5" r="1.2" fill="#e84e5e"/><circle cx="12" cy="10" r="1.3" fill="none"/><circle cx="16" cy="16" r="1.3" fill="none"/><circle cx="18.5" cy="14" r="1.3" fill="none"/>
      </g>
      <!-- icon3 pills (center 195,289) -->
      <g transform="translate(175,265)">
        <path d="M1.5 9 a7.5 7.5 0 0 1 15 0 v7 h-15z" fill="#83ddd3"/>
        <path d="M1.5 16 h15 v8 a7.5 7.5 0 0 1 -15 0z" fill="#dcdce4"/>
        <circle cx="26" cy="24" r="8.5" fill="#f2c04d"/><path d="M26 15.5 v17" fill="none"/>
        <circle cx="32" cy="36" r="8.5" fill="#f2c04d"/><path d="M26 42 l12 -12" fill="none"/>
      </g>
      <!-- icon4 round flask (center 54,355) -->
      <g transform="translate(35,338)">
        <circle cx="17" cy="28" r="11.5" fill="#c6e8f5"/>
        <path d="M5.8 30 a11.5 11.5 0 0 0 22.4 0z" fill="#83ddd3" stroke="none"/>
        <circle cx="17" cy="28" r="11.5" fill="none"/>
        <rect x="13.5" y="11" width="7" height="7" fill="#c6e8f5"/><path d="M11 10.5 h12" fill="none"/>
        <path d="M7 29 h16" fill="none"/><circle cx="9" cy="29" r="2.2" fill="#fff"/>
        <circle cx="17" cy="22" r="1.5" fill="none"/><circle cx="20" cy="26" r="1.3" fill="none"/>
        <path d="M1 5 l5 -1 l2 4 l-4 2z M27 31 l3 -5 l5 4" fill="none"/><circle cx="1" cy="5" r="1.2" fill="#fff"/><circle cx="35" cy="30" r="1.5" fill="#e84e5e"/>
        <circle cx="12" cy="-4" r="1.3" fill="none"/><circle cx="18" cy="-3" r="1.2" fill="none"/><circle cx="22" cy="-1" r="0.8" fill="none"/>
      </g>
      <!-- icon5 molecule hex -->
      <g><path d="M111 336.7 L119 341 M139.7 353.5 L133 350 M118.4 375.5 L125 371 M132.3 377 V373" fill="none"/><polygon points="125.8,352.8 118.9,348.8 118.9,340.8 125.8,336.8 132.7,340.8 132.7,348.8" fill="none"/><circle cx="125.8" cy="344.8" r="6.6" fill="#f2c04d" stroke="none"/><circle cx="125.8" cy="352.8" r="1.4" fill="#2c9896"/><circle cx="118.9" cy="348.8" r="1.4" fill="#2c9896"/><circle cx="118.9" cy="340.8" r="1.4" fill="#2c9896"/><circle cx="125.8" cy="336.8" r="1.4" fill="#2c9896"/><circle cx="132.7" cy="340.8" r="1.4" fill="#2c9896"/><circle cx="132.7" cy="348.8" r="1.4" fill="#2c9896"/><polygon points="118.4,366.0 111.5,362.0 111.5,354.0 118.4,350.0 125.3,354.0 125.3,362.0" fill="none"/><circle cx="118.4" cy="358" r="6.6" fill="#c6e8f5" stroke="none"/><circle cx="118.4" cy="366.0" r="1.4" fill="#2c9896"/><circle cx="111.5" cy="362.0" r="1.4" fill="#2c9896"/><circle cx="111.5" cy="354.0" r="1.4" fill="#2c9896"/><circle cx="118.4" cy="350.0" r="1.4" fill="#2c9896"/><circle cx="125.3" cy="354.0" r="1.4" fill="#2c9896"/><circle cx="125.3" cy="362.0" r="1.4" fill="#2c9896"/><polygon points="132.3,374.7 125.4,370.7 125.4,362.7 132.3,358.7 139.2,362.7 139.2,370.7" fill="none"/><circle cx="132.3" cy="366.7" r="6.6" fill="#83ddd3" stroke="none"/><circle cx="132.3" cy="374.7" r="1.4" fill="#2c9896"/><circle cx="125.4" cy="370.7" r="1.4" fill="#2c9896"/><circle cx="125.4" cy="362.7" r="1.4" fill="#2c9896"/><circle cx="132.3" cy="358.7" r="1.4" fill="#2c9896"/><circle cx="139.2" cy="362.7" r="1.4" fill="#2c9896"/><circle cx="139.2" cy="370.7" r="1.4" fill="#2c9896"/><circle cx="111" cy="336.7" r="1.6" fill="#2c9896"/><circle cx="139.7" cy="353.5" r="1.6" fill="#2c9896"/><circle cx="118.4" cy="375.5" r="1.6" fill="#2c9896"/><circle cx="132.3" cy="377" r="1.6" fill="#2c9896"/><path d="M114 355 v6" fill="none"/></g>
      <!-- icon6 petri (center 195,355) -->
      <g transform="translate(174,337)">
        <circle cx="18" cy="18" r="17.5" fill="#7c7b86"/>
        <circle cx="18" cy="18" r="14" fill="#c6e8f5"/>
        <circle cx="12" cy="10" r="1.5" fill="#e84e5e"/><circle cx="24" cy="10" r="2" fill="none"/><circle cx="11" cy="20" r="2" fill="#f2c04d"/><circle cx="18" cy="17" r="2" fill="#e84e5e"/><circle cx="15" cy="27" r="1.5" fill="#e84e5e"/>
        <circle cx="29.5" cy="24" r="10.5" fill="#c6e8f5"/><circle cx="29.5" cy="24" r="8" fill="none"/>
        <path d="M27 20 h5 M27 27 h5" stroke="#e84e5e" stroke-width="2"/>
      </g>
      <!-- icon7 atom (center 54,422) -->
      <g transform="translate(54,422)" fill="none">
        <ellipse rx="22" ry="8" transform="rotate(0)"/>
        <ellipse rx="22" ry="8" transform="rotate(60)"/>
        <ellipse rx="22" ry="8" transform="rotate(-60)"/>
        <circle r="4.5" fill="#6d6a7a"/>
        <circle cx="-15" cy="-12" r="2" fill="#83ddd3"/><circle cx="19" cy="-5" r="2" fill="#e84e5e"/><circle cx="-9" cy="16" r="2" fill="#f2c04d"/>
      </g>
      <!-- icon8 rack (center 125,422) -->
      <g transform="translate(103,403)">
        <path d="M4 1 v33 M41 1 v33 M3 1 h2 M40 1 h2" fill="none"/>
        <path d="M1 19 h44" fill="none"/>
        <rect x="0.5" y="34" width="45" height="3" fill="#f0e07a"/>
        <path d="M10 12 h6 v20 a3 3 0 0 1 -6 0z" fill="#c6e8f5"/><path d="M9 10 h8 v3 h-8z" fill="#c6e8f5"/>
        <path d="M20 12 h6 v20 a3 3 0 0 1 -6 0z" fill="#c6e8f5"/><path d="M19 10 h8 v3 h-8z" fill="#c6e8f5"/>
        <path d="M21 26 h4 v6 a2 2 0 0 1 -4 0z" fill="#f2c04d" stroke="none"/>
        <path d="M30 12 h6 v20 a3 3 0 0 1 -6 0z" fill="#c6e8f5"/><path d="M29 10 h8 v3 h-8z" fill="#c6e8f5"/>
        <path d="M31 21 h4 v11 a2 2 0 0 1 -4 0z" fill="#e84e5e" stroke="none"/>
      </g>
      <!-- icon9 book (center 196,422) -->
      <g transform="translate(181,400)">
        <path d="M2.5 41 v4 h27 v-4" fill="#e6f2f2"/>
        <rect x="1.5" y="1" width="29" height="40" rx="2" fill="#83ddd3"/>
        <path d="M6 1 v40" fill="none"/>
        <rect x="13" y="43" width="3" height="4" fill="#e84e5e" stroke="none"/>
        <path d="M16 9 l-3.5 5.5 h7z" fill="none"/>
        <circle cx="16" cy="9" r="1.3" fill="#83ddd3"/><circle cx="12.5" cy="14.5" r="1.3" fill="#83ddd3"/><circle cx="19.5" cy="14.5" r="1.3" fill="#83ddd3"/>
        <path d="M13 21 h1 M16 21 h1 M19 21 h1" fill="none" stroke="#e6f2f2"/>
        <path d="M10 25.5 h12 M12 28.5 h8" fill="none"/>
      </g>
    </g></svg>
<div class="t" style="left:633.25px;top:381.64px;font-size:18.1px;color:#ffffff;font-family:'Liberation Serif',serif;font-weight:bold;">Nicolai ALUCHI,</div>
<div class="t" style="left:467.70px;top:409.84px;font-size:18.1px;color:#ffffff;font-family:'Liberation Serif',serif;font-weight:bold;transform:scaleX(1.0018);transform-origin:0 0;">Decan, doctor, conferențiar universitar</div>
<div class="t" style="left:347.00px;top:457.74px;font-size:18.1px;color:#ffffff;font-family:'Liberation Serif',serif;font-weight:bold;transform:scaleX(0.9991);transform-origin:0 0;">16 martie 2024</div></div></div>
<div class="a" style="left:84px;top:332px;width:279px;height:157px;overflow:hidden;outline:1px solid #d4d4d8"><div class="a" style="left:0px;top:0px;width:279px;height:157px;background:#2c9896;"></div><svg class="a" style="left:0;top:0" width="279" height="157" viewBox="0 0 279 157">
      <polygon points="253,0 279,0 279,25" fill="#dad9dd"/>
      <polygon points="236.5,0 244.5,0 261,18 257,21.5" fill="#fff"/>
      <polygon points="0,122 0,157 35,157" fill="#dad9dd"/>
      <polygon points="18,137 22,133.5 44,156 36,156" fill="#fff"/>
    </svg><svg class="a" style="left:12px;top:6px" width="70" height="20" viewBox="0 0 70 20">
      <path d="M0.5 1 h12 l-1 2.4 h-8 v9 l4.5 3.5 l4 -2 l1.6 1.5 l-5.6 3.3 l-5.5 -3.5 z" fill="#fff"/>
      <path d="M4.6 5 h4.6 v1.2 h-1 v4.6 h1 v1.2 h-4.6 v-1.2 h1.1 v-4.6 h-1.1z" fill="#fff"/>
    </svg><div class="t" style="left:28.00px;top:6.96px;font-size:9.5px;color:#fff;font-family:'Liberation Sans',sans-serif;font-weight:bold;transform:scaleX(0.9471);transform-origin:0 0;">UPSC</div><div class="t" style="left:28.00px;top:16.35px;font-size:3.6px;color:#dfeeee;font-family:'Liberation Sans',sans-serif;transform:scaleX(1.0636);transform-origin:0 0;">FACULTATEA DE</div><div class="t" style="left:28.00px;top:20.85px;font-size:3.6px;color:#dfeeee;font-family:'Liberation Sans',sans-serif;transform:scaleX(1.1929);transform-origin:0 0;">BIOLOGIE ȘI CHIMIE</div><div class="t" style="left:89.40px;top:15.33px;font-size:7.6px;color:#fff;font-family:'Liberation Serif',serif;font-weight:bold;transform:scaleX(0.9197);transform-origin:0 0;">ORGANIGRAMA FACULTĂȚII</div><div class="a" style="left:38.9px;top:27.7px;width:202.4px;height:124.3px;background:#fdfdfd;"></div><div class="a" style="left:90.9px;top:31.6px;width:87.6px;height:12.8px;background:#4472c4;"></div><div class="a" style="left:124.7px;top:47.5px;width:20.0px;height:12.2px;background:#4472c4;"></div><div class="a" style="left:105.5px;top:63px;width:59.7px;height:11.6px;background:#4472c4;"></div><div class="a" style="left:55.5px;top:78.2px;width:31.3px;height:13.6px;background:#4472c4;"></div><div class="a" style="left:119.6px;top:78.2px;width:31.3px;height:13.6px;background:#4472c4;"></div><div class="a" style="left:171.4px;top:79px;width:31.5px;height:12.8px;background:#4472c4;"></div><div class="a" style="left:204.2px;top:79px;width:35.1px;height:37.1px;background:#4472c4;"></div><div class="a" style="left:41.5px;top:96.1px;width:24.3px;height:27.2px;background:#4472c4;"></div><div class="a" style="left:75.3px;top:96.1px;width:24.6px;height:27.2px;background:#4472c4;"></div><div class="a" style="left:105px;top:96.1px;width:24.9px;height:27.2px;background:#4472c4;"></div><div class="a" style="left:139.3px;top:96.1px;width:24.4px;height:27.2px;background:#4472c4;"></div><div class="a" style="left:170.8px;top:96.1px;width:24.4px;height:27.2px;background:#4472c4;"></div><div class="a" style="left:42px;top:125.6px;width:57.9px;height:24.6px;background:#4472c4;"></div><div class="a" style="left:105px;top:125.6px;width:58.7px;height:24.6px;background:#4472c4;"></div><div class="a" style="left:170.3px;top:125.6px;width:69.0px;height:24.6px;background:#4472c4;"></div><div class="a" style="left:96px;top:37px;width:76px;height:1.2px;background:rgba(220,230,255,0.55);"></div><div class="a" style="left:127px;top:53px;width:15px;height:1.2px;background:rgba(220,230,255,0.55);"></div><div class="a" style="left:109px;top:68px;width:52px;height:1.2px;background:rgba(220,230,255,0.55);"></div><div class="a" style="left:58px;top:84px;width:25px;height:1.2px;background:rgba(220,230,255,0.55);"></div><div class="a" style="left:122px;top:84px;width:25px;height:1.2px;background:rgba(220,230,255,0.55);"></div><div class="a" style="left:174px;top:84px;width:25px;height:1.2px;background:rgba(220,230,255,0.55);"></div><div class="a" style="left:207px;top:85px;width:28px;height:1.2px;background:rgba(220,230,255,0.55);"></div><div class="a" style="left:207px;top:92px;width:28px;height:1.2px;background:rgba(220,230,255,0.55);"></div><div class="a" style="left:207px;top:99px;width:28px;height:1.2px;background:rgba(220,230,255,0.55);"></div><div class="a" style="left:207px;top:106px;width:28px;height:1.2px;background:rgba(220,230,255,0.55);"></div><div class="a" style="left:44px;top:108px;width:18px;height:1.2px;background:rgba(220,230,255,0.55);"></div><div class="a" style="left:78px;top:108px;width:18px;height:1.2px;background:rgba(220,230,255,0.55);"></div><div class="a" style="left:107px;top:108px;width:18px;height:1.2px;background:rgba(220,230,255,0.55);"></div><div class="a" style="left:142px;top:108px;width:18px;height:1.2px;background:rgba(220,230,255,0.55);"></div><div class="a" style="left:173px;top:108px;width:18px;height:1.2px;background:rgba(220,230,255,0.55);"></div><div class="a" style="left:45px;top:131px;width:50px;height:1.2px;background:rgba(220,230,255,0.55);"></div><div class="a" style="left:45px;top:135px;width:46px;height:1.2px;background:rgba(220,230,255,0.55);"></div><div class="a" style="left:45px;top:139px;width:48px;height:1.2px;background:rgba(220,230,255,0.55);"></div><div class="a" style="left:108px;top:131px;width:50px;height:1.2px;background:rgba(220,230,255,0.55);"></div><div class="a" style="left:108px;top:135px;width:40px;height:1.2px;background:rgba(220,230,255,0.55);"></div><div class="a" style="left:108px;top:139px;width:46px;height:1.2px;background:rgba(220,230,255,0.55);"></div><div class="a" style="left:173px;top:131px;width:60px;height:1.2px;background:rgba(220,230,255,0.55);"></div><div class="a" style="left:173px;top:135px;width:40px;height:1.2px;background:rgba(220,230,255,0.55);"></div><div class="a" style="left:173px;top:139px;width:44px;height:1.2px;background:rgba(220,230,255,0.55);"></div><div class="a" style="left:173px;top:143px;width:40px;height:1.2px;background:rgba(220,230,255,0.55);"></div></div>
<div class="a" style="left:84px;top:505px;width:279px;height:157px;overflow:hidden;outline:1px solid #d4d4d8"><div class="a" style="left:0px;top:0px;width:279px;height:157px;background:#2c9896;"></div><svg class="a" style="left:0;top:0" width="279" height="157" viewBox="0 0 279 157">
      <polygon points="253,0 279,0 279,25" fill="#dad9dd"/>
      <polygon points="236.5,0 244.5,0 261,18 257,21.5" fill="#fff"/>
      <polygon points="0,122 0,157 35,157" fill="#dad9dd"/>
      <polygon points="18,137 22,133.5 44,156 36,156" fill="#fff"/>
    </svg><svg class="a" style="left:12px;top:6px" width="70" height="20" viewBox="0 0 70 20">
      <path d="M0.5 1 h12 l-1 2.4 h-8 v9 l4.5 3.5 l4 -2 l1.6 1.5 l-5.6 3.3 l-5.5 -3.5 z" fill="#fff"/>
      <path d="M4.6 5 h4.6 v1.2 h-1 v4.6 h1 v1.2 h-4.6 v-1.2 h1.1 v-4.6 h-1.1z" fill="#fff"/>
    </svg><div class="t" style="left:28.00px;top:6.96px;font-size:9.5px;color:#fff;font-family:'Liberation Sans',sans-serif;font-weight:bold;transform:scaleX(0.9471);transform-origin:0 0;">UPSC</div><div class="t" style="left:28.00px;top:16.35px;font-size:3.6px;color:#dfeeee;font-family:'Liberation Sans',sans-serif;transform:scaleX(1.0636);transform-origin:0 0;">FACULTATEA DE</div><div class="t" style="left:28.00px;top:20.85px;font-size:3.6px;color:#dfeeee;font-family:'Liberation Sans',sans-serif;transform:scaleX(1.1929);transform-origin:0 0;">BIOLOGIE ȘI CHIMIE</div><div class="t" style="left:107.80px;top:13.13px;font-size:7.6px;color:#fff;font-family:'Liberation Serif',serif;font-weight:bold;transform:scaleX(0.9112);transform-origin:0 0;">OFERTA EDUCAȚIONALĂ</div><div class="a" style="left:47.4px;top:25.5px;width:196.5px;height:128.7px;background:#d3e6ee;"></div><div class="a" style="left:48.5px;top:28.4px;width:51.1px;height:9.6px;background:#3f8fc0;"></div><div class="a" style="left:106.7px;top:28.4px;width:50.9px;height:9.6px;background:#3f8fc0;"></div><div class="a" style="left:171.8px;top:28.4px;width:62.2px;height:9.6px;background:#3f8fc0;"></div><div class="a" style="left:57px;top:38px;width:1px;height:106px;background:#5b7d8c;"></div><div class="a" style="left:114px;top:38px;width:1px;height:62px;background:#5b7d8c;"></div><div class="a" style="left:178px;top:38px;width:1px;height:105px;background:#5b7d8c;"></div><div class="a" style="left:57px;top:54px;width:10px;height:1px;background:#5b7d8c;"></div><div class="a" style="left:57px;top:76px;width:10px;height:1px;background:#5b7d8c;"></div><div class="a" style="left:57px;top:100px;width:10px;height:1px;background:#5b7d8c;"></div><div class="a" style="left:57px;top:121px;width:10px;height:1px;background:#5b7d8c;"></div><div class="a" style="left:57px;top:144px;width:10px;height:1px;background:#5b7d8c;"></div><div class="a" style="left:114px;top:53px;width:9px;height:1px;background:#5b7d8c;"></div><div class="a" style="left:114px;top:77px;width:9px;height:1px;background:#5b7d8c;"></div><div class="a" style="left:114px;top:100px;width:9px;height:1px;background:#5b7d8c;"></div><div class="a" style="left:178px;top:48px;width:5px;height:1px;background:#5b7d8c;"></div><div class="a" style="left:178px;top:62px;width:5px;height:1px;background:#5b7d8c;"></div><div class="a" style="left:178px;top:79px;width:5px;height:1px;background:#5b7d8c;"></div><div class="a" style="left:178px;top:95px;width:5px;height:1px;background:#5b7d8c;"></div><div class="a" style="left:178px;top:108px;width:5px;height:1px;background:#5b7d8c;"></div><div class="a" style="left:178px;top:123px;width:5px;height:1px;background:#5b7d8c;"></div><div class="a" style="left:178px;top:142px;width:5px;height:1px;background:#5b7d8c;"></div><div class="a" style="left:67px;top:45px;width:30px;height:17.8px;background:#f4f6f6;box-shadow:0 0.5px 1px rgba(0,0,0,0.3)"></div><div class="a" style="left:67px;top:67.5px;width:30px;height:17.7px;background:#f4f6f6;box-shadow:0 0.5px 1px rgba(0,0,0,0.3)"></div><div class="a" style="left:67px;top:91.3px;width:30px;height:17.7px;background:#f4f6f6;box-shadow:0 0.5px 1px rgba(0,0,0,0.3)"></div><div class="a" style="left:67px;top:112.6px;width:30px;height:17.8px;background:#f4f6f6;box-shadow:0 0.5px 1px rgba(0,0,0,0.3)"></div><div class="a" style="left:67px;top:135px;width:30px;height:17.8px;background:#f4f6f6;box-shadow:0 0.5px 1px rgba(0,0,0,0.3)"></div><div class="a" style="left:123px;top:44px;width:31px;height:18.8px;background:#f4f6f6;box-shadow:0 0.5px 1px rgba(0,0,0,0.3)"></div><div class="a" style="left:123px;top:68.2px;width:31px;height:17.8px;background:#f4f6f6;box-shadow:0 0.5px 1px rgba(0,0,0,0.3)"></div><div class="a" style="left:123px;top:91.3px;width:31px;height:17.7px;background:#f4f6f6;box-shadow:0 0.5px 1px rgba(0,0,0,0.3)"></div><div class="a" style="left:183.5px;top:41.5px;width:49.8px;height:12.5px;background:#f4f6f6;box-shadow:0 0.5px 1px rgba(0,0,0,0.3)"></div><div class="a" style="left:183.5px;top:56.5px;width:49.8px;height:11.7px;background:#f4f6f6;box-shadow:0 0.5px 1px rgba(0,0,0,0.3)"></div><div class="a" style="left:183.5px;top:72.4px;width:49.8px;height:12.8px;background:#f4f6f6;box-shadow:0 0.5px 1px rgba(0,0,0,0.3)"></div><div class="a" style="left:183.5px;top:90.6px;width:49.8px;height:9.6px;background:#f4f6f6;box-shadow:0 0.5px 1px rgba(0,0,0,0.3)"></div><div class="a" style="left:183.5px;top:103px;width:49.8px;height:9.6px;background:#f4f6f6;box-shadow:0 0.5px 1px rgba(0,0,0,0.3)"></div><div class="a" style="left:183.5px;top:117.2px;width:49.8px;height:12.1px;background:#f4f6f6;box-shadow:0 0.5px 1px rgba(0,0,0,0.3)"></div><div class="a" style="left:183.5px;top:134px;width:49.8px;height:15.2px;background:#f4f6f6;box-shadow:0 0.5px 1px rgba(0,0,0,0.3)"></div><div class="a" style="left:72px;top:49.0px;width:20px;height:1px;background:#8a8f90;"></div><div class="a" style="left:72px;top:52.5px;width:20px;height:1px;background:#8a8f90;"></div><div class="a" style="left:72px;top:56.0px;width:20px;height:1px;background:#8a8f90;"></div><div class="a" style="left:72px;top:71.5px;width:20px;height:1px;background:#8a8f90;"></div><div class="a" style="left:72px;top:75.0px;width:20px;height:1px;background:#8a8f90;"></div><div class="a" style="left:72px;top:78.5px;width:20px;height:1px;background:#8a8f90;"></div><div class="a" style="left:72px;top:95.3px;width:20px;height:1px;background:#8a8f90;"></div><div class="a" style="left:72px;top:98.8px;width:20px;height:1px;background:#8a8f90;"></div><div class="a" style="left:72px;top:102.3px;width:20px;height:1px;background:#8a8f90;"></div><div class="a" style="left:72px;top:116.6px;width:20px;height:1px;background:#8a8f90;"></div><div class="a" style="left:72px;top:120.1px;width:20px;height:1px;background:#8a8f90;"></div><div class="a" style="left:72px;top:123.6px;width:20px;height:1px;background:#8a8f90;"></div><div class="a" style="left:72px;top:139.0px;width:20px;height:1px;background:#8a8f90;"></div><div class="a" style="left:72px;top:142.5px;width:20px;height:1px;background:#8a8f90;"></div><div class="a" style="left:72px;top:146.0px;width:20px;height:1px;background:#8a8f90;"></div><div class="a" style="left:128px;top:48.0px;width:21px;height:1px;background:#8a8f90;"></div><div class="a" style="left:128px;top:51.5px;width:21px;height:1px;background:#8a8f90;"></div><div class="a" style="left:128px;top:55.0px;width:21px;height:1px;background:#8a8f90;"></div><div class="a" style="left:128px;top:72.2px;width:21px;height:1px;background:#8a8f90;"></div><div class="a" style="left:128px;top:75.7px;width:21px;height:1px;background:#8a8f90;"></div><div class="a" style="left:128px;top:79.2px;width:21px;height:1px;background:#8a8f90;"></div><div class="a" style="left:128px;top:95.3px;width:21px;height:1px;background:#8a8f90;"></div><div class="a" style="left:128px;top:98.8px;width:21px;height:1px;background:#8a8f90;"></div><div class="a" style="left:128px;top:102.3px;width:21px;height:1px;background:#8a8f90;"></div><div class="a" style="left:187.5px;top:44.5px;width:41.80000000000001px;height:1px;background:#8a8f90;"></div><div class="a" style="left:189.5px;top:48.0px;width:37.80000000000001px;height:1px;background:#8a8f90;"></div><div class="a" style="left:187.5px;top:59.5px;width:41.80000000000001px;height:1px;background:#8a8f90;"></div><div class="a" style="left:189.5px;top:63.0px;width:37.80000000000001px;height:1px;background:#8a8f90;"></div><div class="a" style="left:187.5px;top:75.4px;width:41.80000000000001px;height:1px;background:#8a8f90;"></div><div class="a" style="left:189.5px;top:78.9px;width:37.80000000000001px;height:1px;background:#8a8f90;"></div><div class="a" style="left:187.5px;top:93.6px;width:41.80000000000001px;height:1px;background:#8a8f90;"></div><div class="a" style="left:189.5px;top:97.1px;width:37.80000000000001px;height:1px;background:#8a8f90;"></div><div class="a" style="left:187.5px;top:106px;width:41.80000000000001px;height:1px;background:#8a8f90;"></div><div class="a" style="left:189.5px;top:109.5px;width:37.80000000000001px;height:1px;background:#8a8f90;"></div><div class="a" style="left:187.5px;top:120.2px;width:41.80000000000001px;height:1px;background:#8a8f90;"></div><div class="a" style="left:189.5px;top:123.7px;width:37.80000000000001px;height:1px;background:#8a8f90;"></div><div class="a" style="left:187.5px;top:137px;width:41.80000000000001px;height:1px;background:#8a8f90;"></div><div class="a" style="left:189.5px;top:140.5px;width:37.80000000000001px;height:1px;background:#8a8f90;"></div></div>
<div class="a" style="left:84px;top:678px;width:279px;height:72px;overflow:hidden;outline:1px solid #d4d4d8"><div class="a" style="left:0px;top:0px;width:279px;height:157px;background:#2c9896;"></div><svg class="a" style="left:0;top:0" width="279" height="157" viewBox="0 0 279 157">
      <polygon points="253,0 279,0 279,25" fill="#dad9dd"/>
      <polygon points="236.5,0 244.5,0 261,18 257,21.5" fill="#fff"/>
      <polygon points="0,122 0,157 35,157" fill="#dad9dd"/>
      <polygon points="18,137 22,133.5 44,156 36,156" fill="#fff"/>
    </svg><svg class="a" style="left:12px;top:7px" width="70" height="20" viewBox="0 0 70 20">
      <path d="M0.5 1 h12 l-1 2.4 h-8 v9 l4.5 3.5 l4 -2 l1.6 1.5 l-5.6 3.3 l-5.5 -3.5 z" fill="#fff"/>
      <path d="M4.6 5 h4.6 v1.2 h-1 v4.6 h1 v1.2 h-4.6 v-1.2 h1.1 v-4.6 h-1.1z" fill="#fff"/>
    </svg><div class="t" style="left:28.00px;top:7.96px;font-size:9.5px;color:#fff;font-family:'Liberation Sans',sans-serif;font-weight:bold;transform:scaleX(0.9471);transform-origin:0 0;">UPSC</div><div class="t" style="left:28.00px;top:17.35px;font-size:3.6px;color:#dfeeee;font-family:'Liberation Sans',sans-serif;transform:scaleX(1.0636);transform-origin:0 0;">FACULTATEA DE</div><div class="t" style="left:28.00px;top:21.85px;font-size:3.6px;color:#dfeeee;font-family:'Liberation Sans',sans-serif;transform:scaleX(1.1929);transform-origin:0 0;">BIOLOGIE ȘI CHIMIE</div><div class="t" style="left:85.40px;top:6.62px;font-size:10px;color:#fff;font-family:'Liberation Serif',serif;font-weight:bold;transform:scaleX(0.9744);transform-origin:0 0;">Acreditare internațională, Ciclul I</div><div class="a" style="left:99px;top:25px;width:102px;height:60px;background:linear-gradient(180deg,#f9f0e4 0%,#f8e0c0 35%,#f6d4a8 100%)"></div><div class="a" style="left:183px;top:27px;width:13px;height:28px;background:#e6e0b0;"></div><div class="a" style="left:185px;top:30px;width:9px;height:12px;background:#d8c080;"></div><div class="a" style="left:130px;top:43px;width:38px;height:1px;background:#8a7a60;"></div><div class="a" style="left:142px;top:48px;width:14px;height:1px;background:#8a7a60;"></div><div class="t" style="left:126.00px;top:60.32px;font-size:19px;color:#c8b466;font-family:'Liberation Sans',sans-serif;font-weight:bold;transform:scaleX(0.7651);transform-origin:0 0;">AQAS</div></div>
<div class="a" style="left:377px;top:145px;width:15px;height:605px;background:#efefef;"></div>
<div class="a" style="left:379px;top:145px;width:11px;height:12px;background:#fff;border:1px solid #a8a8a8"></div>
<svg class="a" style="left:381px;top:148px" width="7" height="5"><path d="M0 4.5 l3.5 -4 l3.5 4z" fill="#111"/></svg>
<div class="a" style="left:379px;top:156px;width:11px;height:78px;background:#fff;border:1px solid #a8a8a8"></div>
<div class="a" style="left:379px;top:737px;width:11px;height:12px;background:#fff;border:1px solid #a8a8a8"></div>
<svg class="a" style="left:381px;top:740px" width="7" height="5"><path d="M0 0.5 l3.5 4 l3.5 -4z" fill="#111"/></svg>
<div class="a" style="left:393px;top:145px;width:1px;height:604px;background:#c4c4c4;"></div>
<div class="a" style="left:406px;top:160px;width:876px;height:547px;overflow:hidden"><div class="a" style="left:0px;top:0px;width:876px;height:547px;background:#2c9896;"></div>
<svg class="a" style="left:0;top:0" width="876" height="547" viewBox="0 0 876 547">
      <polygon points="0,407.7 0,512.5 105.5,512.5" fill="#dad9dd"/>
      <polygon points="57.1,451.5 69,440 135.7,506.25 111.3,506.25" fill="#fff"/>
      <polygon points="793,0 876,0 876,77" fill="#dad9dd"/>
      <polygon points="743,0 767,0 819,55.6 807,66" fill="#fff"/>
    </svg>
<svg class="a" style="left:0;top:0" width="300" height="110" viewBox="0 0 300 110">
      <path d="M26.1 29 L77.1 29 L73.2 38.6 L36.2 38.6 L36.2 72 L54.9 86 L72.1 77.2 L78.9 83.4 L54.9 97.2 L30 82 Q26.1 79 26.1 73 Z" fill="#fff"/>
      <path d="M45.6 44.4 h19.2 v5.2 h-4.1 v19.8 h4.1 v5.2 h-19.2 v-5.2 h4.65 v-19.8 h-4.65 z" fill="#fff"/>
    </svg>
<div class="t" style="left:94.30px;top:23.63px;font-size:36px;color:#fff;font-family:'Liberation Sans',sans-serif;font-weight:bold;transform:scaleX(1.0398);transform-origin:0 0;">UPSC</div>
<div class="t" style="left:96.00px;top:62.19px;font-size:13.6px;color:#f4fbfb;font-family:'Liberation Sans',sans-serif;letter-spacing:0.9px;transform:scaleX(1.0063);transform-origin:0 0;">FACULTATEA DE</div>
<div class="t" style="left:96.00px;top:79.19px;font-size:13.6px;color:#f4fbfb;font-family:'Liberation Sans',sans-serif;letter-spacing:0.9px;transform:scaleX(1.1394);transform-origin:0 0;">BIOLOGIE ȘI CHIMIE</div>
<div class="t" style="left:148.00px;top:122.54px;font-size:27.3px;color:#ffffff;font-family:'Liberation Serif',serif;font-weight:bold;transform:scaleX(1.0010);transform-origin:0 0;">CONFERINȚA ȘTIINȚIFICO-PRACTICĂ</div>
<div class="t" style="left:278.30px;top:154.34px;font-size:27.3px;color:#ffffff;font-family:'Liberation Serif',serif;font-weight:bold;transform:scaleX(0.9947);transform-origin:0 0;">INTERNAȚIONALĂ</div>
<div class="t" style="left:55.00px;top:205.04px;font-size:27.3px;color:#ffffff;font-family:'Liberation Serif',serif;font-weight:bold;font-style:italic;">„INSTRUIRE PRIN CERCETARE PENTRU O SOCIETATE</div>
<div class="t" style="left:247.00px;top:238.04px;font-size:27.3px;color:#ffffff;font-family:'Liberation Serif',serif;font-weight:bold;font-style:italic;">PROSPERĂ</div>
<div class="t" style="left:388.09px;top:238.04px;font-size:27.3px;color:#ffffff;font-family:'Liberation Serif',serif;font-weight:bold;">”, ediția a XI-a</div>
<svg class="a" style="left:0;top:0" width="876" height="547" viewBox="0 0 876 547">
    <g stroke="#1d2b36" stroke-width="1.3" stroke-linejoin="round" stroke-linecap="round">
      <!-- icon1 molecule (center 54.5,289) -->
      <g transform="translate(32,265)">
        <path d="M11 4 v6 M2 10 l5 3 M2 24 l5 -3" fill="none"/>
        <polygon points="11,10 16.5,13 16.5,20 11,23 5.5,20 5.5,13" fill="#83ddd3"/>
        <polygon points="17,20 22.5,23 22.5,30 17,33 11.5,30 11.5,23" fill="#c6e8f5"/>
        <polygon points="28,20 33.5,23 33.5,30 28,33 22.5,30 22.5,23" fill="#c6e8f5"/>
        <polygon points="34,30 39.5,33 39.5,40 34,43 28.5,40 28.5,33" fill="#f2c04d"/>
        <path d="M34 43 v6 M39.5 40 l4 3 M39.5 33 l3 -2 M14 24 v5" fill="none"/>
      </g>
      <!-- icon2 flask + tube (center 125,289) -->
      <g transform="translate(104,265)">
        <path d="M11 22 h8 v2 h-1 v6 l8 14 h-22 l8 -14 v-6 h-1 z" fill="#c6e8f5"/>
        <path d="M7.5 35 l-5 9 h22 l-5 -9 z" fill="#e84e5e" stroke="none"/>
        <path d="M11 22 h8 v2 h-1 v6 l8 14 h-22 l8 -14 v-6 h-1 z" fill="none"/>
        <circle cx="14" cy="38" r="2" fill="#fff"/>
        <path d="M18 3 v6 M18 6 h20 a2.5 2.5 0 0 1 0 5 h-20" fill="#f2c04d"/>
        <path d="M20 6 h6 l-2 5 h-4z" fill="#c6e8f5" stroke="none"/>
        <circle cx="14" cy="5" r="1.2" fill="#e84e5e"/><circle cx="12" cy="10" r="1.3" fill="none"/><circle cx="16" cy="16" r="1.3" fill="none"/><circle cx="18.5" cy="14" r="1.3" fill="none"/>
      </g>
      <!-- icon3 pills (center 195,289) -->
      <g transform="translate(175,265)">
        <path d="M1.5 9 a7.5 7.5 0 0 1 15 0 v7 h-15z" fill="#83ddd3"/>
        <path d="M1.5 16 h15 v8 a7.5 7.5 0 0 1 -15 0z" fill="#dcdce4"/>
        <circle cx="26" cy="24" r="8.5" fill="#f2c04d"/><path d="M26 15.5 v17" fill="none"/>
        <circle cx="32" cy="36" r="8.5" fill="#f2c04d"/><path d="M26 42 l12 -12" fill="none"/>
      </g>
      <!-- icon4 round flask (center 54,355) -->
      <g transform="translate(35,338)">
        <circle cx="17" cy="28" r="11.5" fill="#c6e8f5"/>
        <path d="M5.8 30 a11.5 11.5 0 0 0 22.4 0z" fill="#83ddd3" stroke="none"/>
        <circle cx="17" cy="28" r="11.5" fill="none"/>
        <rect x="13.5" y="11" width="7" height="7" fill="#c6e8f5"/><path d="M11 10.5 h12" fill="none"/>
        <path d="M7 29 h16" fill="none"/><circle cx="9" cy="29" r="2.2" fill="#fff"/>
        <circle cx="17" cy="22" r="1.5" fill="none"/><circle cx="20" cy="26" r="1.3" fill="none"/>
        <path d="M1 5 l5 -1 l2 4 l-4 2z M27 31 l3 -5 l5 4" fill="none"/><circle cx="1" cy="5" r="1.2" fill="#fff"/><circle cx="35" cy="30" r="1.5" fill="#e84e5e"/>
        <circle cx="12" cy="-4" r="1.3" fill="none"/><circle cx="18" cy="-3" r="1.2" fill="none"/><circle cx="22" cy="-1" r="0.8" fill="none"/>
      </g>
      <!-- icon5 molecule hex -->
      <g><path d="M111 336.7 L119 341 M139.7 353.5 L133 350 M118.4 375.5 L125 371 M132.3 377 V373" fill="none"/><polygon points="125.8,352.8 118.9,348.8 118.9,340.8 125.8,336.8 132.7,340.8 132.7,348.8" fill="none"/><circle cx="125.8" cy="344.8" r="6.6" fill="#f2c04d" stroke="none"/><circle cx="125.8" cy="352.8" r="1.4" fill="#2c9896"/><circle cx="118.9" cy="348.8" r="1.4" fill="#2c9896"/><circle cx="118.9" cy="340.8" r="1.4" fill="#2c9896"/><circle cx="125.8" cy="336.8" r="1.4" fill="#2c9896"/><circle cx="132.7" cy="340.8" r="1.4" fill="#2c9896"/><circle cx="132.7" cy="348.8" r="1.4" fill="#2c9896"/><polygon points="118.4,366.0 111.5,362.0 111.5,354.0 118.4,350.0 125.3,354.0 125.3,362.0" fill="none"/><circle cx="118.4" cy="358" r="6.6" fill="#c6e8f5" stroke="none"/><circle cx="118.4" cy="366.0" r="1.4" fill="#2c9896"/><circle cx="111.5" cy="362.0" r="1.4" fill="#2c9896"/><circle cx="111.5" cy="354.0" r="1.4" fill="#2c9896"/><circle cx="118.4" cy="350.0" r="1.4" fill="#2c9896"/><circle cx="125.3" cy="354.0" r="1.4" fill="#2c9896"/><circle cx="125.3" cy="362.0" r="1.4" fill="#2c9896"/><polygon points="132.3,374.7 125.4,370.7 125.4,362.7 132.3,358.7 139.2,362.7 139.2,370.7" fill="none"/><circle cx="132.3" cy="366.7" r="6.6" fill="#83ddd3" stroke="none"/><circle cx="132.3" cy="374.7" r="1.4" fill="#2c9896"/><circle cx="125.4" cy="370.7" r="1.4" fill="#2c9896"/><circle cx="125.4" cy="362.7" r="1.4" fill="#2c9896"/><circle cx="132.3" cy="358.7" r="1.4" fill="#2c9896"/><circle cx="139.2" cy="362.7" r="1.4" fill="#2c9896"/><circle cx="139.2" cy="370.7" r="1.4" fill="#2c9896"/><circle cx="111" cy="336.7" r="1.6" fill="#2c9896"/><circle cx="139.7" cy="353.5" r="1.6" fill="#2c9896"/><circle cx="118.4" cy="375.5" r="1.6" fill="#2c9896"/><circle cx="132.3" cy="377" r="1.6" fill="#2c9896"/><path d="M114 355 v6" fill="none"/></g>
      <!-- icon6 petri (center 195,355) -->
      <g transform="translate(174,337)">
        <circle cx="18" cy="18" r="17.5" fill="#7c7b86"/>
        <circle cx="18" cy="18" r="14" fill="#c6e8f5"/>
        <circle cx="12" cy="10" r="1.5" fill="#e84e5e"/><circle cx="24" cy="10" r="2" fill="none"/><circle cx="11" cy="20" r="2" fill="#f2c04d"/><circle cx="18" cy="17" r="2" fill="#e84e5e"/><circle cx="15" cy="27" r="1.5" fill="#e84e5e"/>
        <circle cx="29.5" cy="24" r="10.5" fill="#c6e8f5"/><circle cx="29.5" cy="24" r="8" fill="none"/>
        <path d="M27 20 h5 M27 27 h5" stroke="#e84e5e" stroke-width="2"/>
      </g>
      <!-- icon7 atom (center 54,422) -->
      <g transform="translate(54,422)" fill="none">
        <ellipse rx="22" ry="8" transform="rotate(0)"/>
        <ellipse rx="22" ry="8" transform="rotate(60)"/>
        <ellipse rx="22" ry="8" transform="rotate(-60)"/>
        <circle r="4.5" fill="#6d6a7a"/>
        <circle cx="-15" cy="-12" r="2" fill="#83ddd3"/><circle cx="19" cy="-5" r="2" fill="#e84e5e"/><circle cx="-9" cy="16" r="2" fill="#f2c04d"/>
      </g>
      <!-- icon8 rack (center 125,422) -->
      <g transform="translate(103,403)">
        <path d="M4 1 v33 M41 1 v33 M3 1 h2 M40 1 h2" fill="none"/>
        <path d="M1 19 h44" fill="none"/>
        <rect x="0.5" y="34" width="45" height="3" fill="#f0e07a"/>
        <path d="M10 12 h6 v20 a3 3 0 0 1 -6 0z" fill="#c6e8f5"/><path d="M9 10 h8 v3 h-8z" fill="#c6e8f5"/>
        <path d="M20 12 h6 v20 a3 3 0 0 1 -6 0z" fill="#c6e8f5"/><path d="M19 10 h8 v3 h-8z" fill="#c6e8f5"/>
        <path d="M21 26 h4 v6 a2 2 0 0 1 -4 0z" fill="#f2c04d" stroke="none"/>
        <path d="M30 12 h6 v20 a3 3 0 0 1 -6 0z" fill="#c6e8f5"/><path d="M29 10 h8 v3 h-8z" fill="#c6e8f5"/>
        <path d="M31 21 h4 v11 a2 2 0 0 1 -4 0z" fill="#e84e5e" stroke="none"/>
      </g>
      <!-- icon9 book (center 196,422) -->
      <g transform="translate(181,400)">
        <path d="M2.5 41 v4 h27 v-4" fill="#e6f2f2"/>
        <rect x="1.5" y="1" width="29" height="40" rx="2" fill="#83ddd3"/>
        <path d="M6 1 v40" fill="none"/>
        <rect x="13" y="43" width="3" height="4" fill="#e84e5e" stroke="none"/>
        <path d="M16 9 l-3.5 5.5 h7z" fill="none"/>
        <circle cx="16" cy="9" r="1.3" fill="#83ddd3"/><circle cx="12.5" cy="14.5" r="1.3" fill="#83ddd3"/><circle cx="19.5" cy="14.5" r="1.3" fill="#83ddd3"/>
        <path d="M13 21 h1 M16 21 h1 M19 21 h1" fill="none" stroke="#e6f2f2"/>
        <path d="M10 25.5 h12 M12 28.5 h8" fill="none"/>
      </g>
    </g></svg>
<div class="t" style="left:633.25px;top:381.64px;font-size:18.1px;color:#ffffff;font-family:'Liberation Serif',serif;font-weight:bold;">Nicolai ALUCHI,</div>
<div class="t" style="left:467.70px;top:409.84px;font-size:18.1px;color:#ffffff;font-family:'Liberation Serif',serif;font-weight:bold;transform:scaleX(1.0018);transform-origin:0 0;">Decan, doctor, conferențiar universitar</div>
<div class="t" style="left:347.00px;top:457.74px;font-size:18.1px;color:#ffffff;font-family:'Liberation Serif',serif;font-weight:bold;transform:scaleX(0.9991);transform-origin:0 0;">16 martie 2024</div></div>
<div class="a" style="left:396px;top:716px;width:910px;height:1px;background:#c6c6c6;"></div>
<div class="t" style="left:403.50px;top:723.59px;font-size:11px;color:#444;font-family:'Liberation Sans',sans-serif;transform:scaleX(1.0029);transform-origin:0 0;">Faceți clic pentru a adăuga note</div>
<div class="a" style="left:1293px;top:662px;width:11px;height:12px;background:#fff;border:1px solid #a8a8a8"></div>
<svg class="a" style="left:1295px;top:665px" width="7" height="5"><path d="M0 0.5 l3.5 4 l3.5 -4z" fill="#111"/></svg>
<svg class="a" style="left:1293px;top:675px" width="12" height="25" viewBox="0 0 12 25"><g fill="#5f5f5f">
      <path d="M6 1 l4.5 4 h-9z M6 5 l4.5 4 h-9z"/><rect x="3" y="8" width="6" height="2"/>
      <path d="M6 24 l4.5 -4 h-9z M6 20 l4.5 -4 h-9z"/><rect x="3" y="15" width="6" height="2"/></g></svg>
<div class="t" style="left:66.40px;top:754.98px;font-size:9px;color:#444;font-family:'Liberation Sans',sans-serif;transform:scaleX(0.9722);transform-origin:0 0;">Diapozitiv 1 din 26</div>
<svg class="a" style="left:153px;top:753px" width="13" height="12" viewBox="0 0 13 12"><path d="M1 1.5 h4 l1 1 l1 -1 h4 v9 h-4 l-1 1 l-1 -1 h-4z M6 2.5 v8" fill="none" stroke="#666" stroke-width="0.9"/><path d="M8 7 l4 -5" stroke="#666" stroke-width="1"/></svg>
<div class="t" style="left:176.00px;top:754.93px;font-size:10px;color:#444;font-family:'Liberation Sans',sans-serif;transform:scaleX(0.8466);transform-origin:0 0;">Română</div>
<svg class="a" style="left:221px;top:752px" width="13" height="13" viewBox="0 0 13 13"><path d="M3 2 a4.5 4.5 0 1 0 6 0" fill="none" stroke="#555" stroke-width="1"/><path d="M5 5 l7 7 M12 5 l-7 7" stroke="#444" stroke-width="1.2"/></svg>
<div class="t" style="left:236.00px;top:754.93px;font-size:10px;color:#222;font-family:'Liberation Sans',sans-serif;font-weight:bold;transform:scaleX(0.7997);transform-origin:0 0;">Accesibilitate: investigați</div>
<svg class="a" style="left:903px;top:753px" width="11" height="11" viewBox="0 0 11 11"><path d="M3.5 3 l2 -2 l2 2" fill="none" stroke="#555" stroke-width="0.9"/><path d="M1 5.5 h9 M1 7.5 h9 M1 9.5 h9" fill="none" stroke="#555" stroke-width="0.9"/></svg>
<div class="t" style="left:916.00px;top:754.93px;font-size:10px;color:#444;font-family:'Liberation Sans',sans-serif;transform:scaleX(0.9468);transform-origin:0 0;">Note</div>
<svg class="a" style="left:950px;top:752px" width="13" height="12" viewBox="0 0 13 12"><path d="M1 1 h11 v7 h-7 l-3 3 v-3 h-1z" fill="#555"/></svg>
<div class="t" style="left:964.00px;top:754.93px;font-size:10px;color:#444;font-family:'Liberation Sans',sans-serif;transform:scaleX(0.8893);transform-origin:0 0;">Comentarii</div>
<svg class="a" style="left:1030px;top:751px" width="130" height="15" viewBox="0 0 130 15"><g fill="none" stroke="#777" stroke-width="0.9"><rect x="1.5" y="2.5" width="10" height="9"/><path d="M1.5 5.5 h3 v6"/><rect x="31.5" y="2.5" width="4" height="3.5"/><rect x="38.5" y="2.5" width="4" height="3.5"/><rect x="31.5" y="8.5" width="4" height="3.5"/><rect x="38.5" y="8.5" width="4" height="3.5"/><path d="M61.5 2.5 h10 v9 h-10z M66.5 2.5 v9 M63 5 h2 M63 7.5 h2 M68 5 h2 M68 7.5 h2"/></g></svg>
<div class="a" style="left:1113px;top:751px;width:30px;height:16px;background:#d2d2d2;"></div>
<svg class="a" style="left:1121px;top:752px" width="13" height="13" viewBox="0 0 13 13"><path d="M1 2.5 h11 M2 2.5 v5 h9 v-5 M6.5 7.5 v2 M4 12 l2.5 -2.5 l2.5 2.5" fill="none" stroke="#666" stroke-width="1"/></svg>
<div class="a" style="left:1147px;top:758px;width:6px;height:1px;background:#555;"></div>
<div class="a" style="left:1157px;top:758px;width:77px;height:1px;background:#888;"></div>
<div class="a" style="left:1192px;top:753px;width:3px;height:9px;background:#555;"></div>
<div class="a" style="left:1237px;top:758px;width:7px;height:1px;background:#555;"></div>
<div class="a" style="left:1240px;top:755px;width:1px;height:7px;background:#555;"></div>
<div class="t" style="left:1253.00px;top:754.93px;font-size:10px;color:#444;font-family:'Liberation Sans',sans-serif;transform:scaleX(0.8117);transform-origin:0 0;">90 %</div>
<svg class="a" style="left:1281px;top:752px" width="12" height="12" viewBox="0 0 12 12"><rect x="0.5" y="0.5" width="11" height="11" fill="none" stroke="#777"/><path d="M3 3 l6 6 M9 3 l-6 6" stroke="#777" stroke-width="0.8"/></svg>
<div class="a" style="left:64px;top:124px;width:16px;height:16px;border-radius:50%;background:#3f78b8"></div>
<div class="a" style="left:71px;top:130px;width:2px;height:7px;background:#fff;"></div>
<div class="a" style="left:71px;top:127px;width:2px;height:2px;background:#fff;"></div>
<div class="t" style="left:87.40px;top:128.33px;font-size:9.3px;color:#333;font-family:'Liberation Sans',sans-serif;transform:scaleX(0.9084);transform-origin:0 0;">OBȚINEȚI OFFICE ORIGINAL</div>
<div class="t" style="left:211.00px;top:128.83px;font-size:9.3px;color:#333;font-family:'Liberation Sans',sans-serif;transform:scaleX(0.9682);transform-origin:0 0;">Licența dvs. nu este autentică și este posibil să fiți victima unei contrafaceri de software. Evitați întreruperea și păstrați-vă fișierele în siguranță cu Office autentic astăzi.</div>
<div class="a" style="left:885px;top:124px;width:117px;height:17px;background:#fdfdfd;border:1px solid #cbc8b8"></div>
<div class="t" style="left:896.00px;top:128.33px;font-size:9.3px;color:#333;font-family:'Liberation Sans',sans-serif;transform:scaleX(1.0183);transform-origin:0 0;">Obțineți Office original</div>
<div class="a" style="left:1009px;top:124px;width:91px;height:17px;background:#fdfdfd;border:1px solid #cbc8b8"></div>
<div class="t" style="left:1021.50px;top:128.33px;font-size:9.3px;color:#333;font-family:'Liberation Sans',sans-serif;transform:scaleX(1.0225);transform-origin:0 0;">Aflați mai multe</div>
<svg class="a" style="left:1289px;top:128px" width="8" height="8"><path d="M1 1 l6.4 6.4 M7.4 1 l-6.4 6.4" stroke="#3a3a3a" stroke-width="1"/></svg>
<div class="a" style="left:1114px;top:137px;width:229px;height:516px;background:#1c1e21;border-radius:3px"></div>
<svg class="a" style="left:1117px;top:140px" width="224" height="126" viewBox="0 0 224 126">
      <defs><filter id="b1" x="-20%" y="-20%" width="140%" height="140%"><feGaussianBlur stdDeviation="2.2"/></filter>
      <filter id="b2" x="-20%" y="-20%" width="140%" height="140%"><feGaussianBlur stdDeviation="0.8"/></filter>
      <filter id="b3" x="-50%" y="-50%" width="200%" height="200%"><feGaussianBlur stdDeviation="4"/></filter>
      <linearGradient id="g1" x1="0" y1="0" x2="1" y2="0.3"><stop offset="0" stop-color="#b6c3ca"/><stop offset="1" stop-color="#cad1d3"/></linearGradient>
      <radialGradient id="f1" cx="0.45" cy="0.55" r="0.6"><stop offset="0" stop-color="#d6b8aa"/><stop offset="0.7" stop-color="#c29c8c"/><stop offset="1" stop-color="#a08274"/></radialGradient></defs>
      <rect width="224" height="126" fill="url(#g1)"/>
      <g filter="url(#b2)">
        <rect x="118" y="12" width="52" height="45" fill="#262a40"/>
        <rect x="138" y="17" width="25" height="37" fill="#4f9040"/>
        <rect x="138" y="17" width="25" height="12" fill="#6aa6dc"/>
        <rect x="138" y="44" width="25" height="10" fill="#4a7ab8"/>
        <rect x="163" y="13" width="6" height="44" fill="#8a7440"/>
      </g>
      <g filter="url(#b1)">
        <path d="M56 126 C52 90 56 40 78 20 C92 8 118 6 136 14 C156 24 162 50 160 70 C164 90 168 110 166 126z" fill="#ab9f8a"/>
        <path d="M147 50 C160 70 166 100 165 126 L148 126 C150 100 150 74 147 50z" fill="#8c8272"/>
        <path d="M60 126 C58 90 62 50 80 28 C72 60 80 100 90 126z" fill="#d6d0be"/>
        <path d="M78 40 C96 18 130 14 150 34 C130 26 104 30 90 50z" fill="#b8ae9a"/>
        <path d="M91 46 C100 34 140 34 148 50 L149 96 C146 116 132 126 122 126 L100 126 C92 112 90 86 91 46z" fill="url(#f1)"/>
        <path d="M94 62 h14 M126 61 h17" stroke="#7a625a" stroke-width="2.5"/>
        <path d="M97 74 h10 M130 73 h12" stroke="#707080" stroke-width="3"/>
        <ellipse cx="116" cy="92" rx="6" ry="9" fill="#e2cabe"/>
        <path d="M108 111 q11 -4 23 0 q-11 5 -23 0z" fill="#a84858"/>
        <path d="M160 126 C166 114 180 114 192 126z" fill="#1e2a5a"/>
      </g>
    </svg>
<div class="a" style="left:1117px;top:247px;width:108px;height:19px;background:rgba(45,45,48,0.72);"></div><svg class="a" style="left:1120px;top:249px" width="15" height="15" viewBox="0 0 15 15">
      <path d="M5.8 3 a2 2 0 0 1 4 0 v4.5 a2 2 0 0 1 -4 0z" fill="#f0504a"/>
      <path d="M4.3 7 a3.5 3.5 0 0 0 7 0 M7.8 10.5 v2.5 M5.5 13.5 h5" fill="none" stroke="#f0504a" stroke-width="1.2"/>
      <path d="M1 14 l13 -13" stroke="#f0504a" stroke-width="1.4"/>
    </svg><div class="t" style="left:1139.30px;top:249.77px;font-size:13.5px;color:#ffffff;font-family:'Liberation Sans',sans-serif;transform:scaleX(0.9639);transform-origin:0 0;">Viorica Coada</div>
<svg class="a" style="left:1117px;top:268px" width="224" height="126" viewBox="0 0 224 126">
      <defs><filter id="c1" x="-30%" y="-30%" width="160%" height="160%"><feGaussianBlur stdDeviation="5"/></filter>
      <filter id="c2" x="-20%" y="-20%" width="140%" height="140%"><feGaussianBlur stdDeviation="1.2"/></filter>
      <linearGradient id="g2" x1="0" y1="0" x2="1" y2="0"><stop offset="0" stop-color="#cbc2b2"/><stop offset="0.3" stop-color="#d9d2c4"/><stop offset="1" stop-color="#e2ddd1"/></linearGradient></defs>
      <rect width="224" height="126" fill="url(#g2)"/>
      <rect x="50" y="58" width="95" height="80" rx="14" fill="#56686b" filter="url(#c1)"/>
      <g filter="url(#c2)">
        <path d="M60 126 C62 100 74 88 100 82 L138 82 C160 88 172 100 176 126z" fill="#1f2d5c"/>
        <path d="M102 86 L136 86 L132 126 L106 126z" fill="#e8ecf2"/>
        <path d="M113 100 L125 100 L122 126 L116 126z" fill="#2a3040"/>
        <path d="M96 50 C96 36 104 30 116 30 C130 30 138 38 138 52 L138 78 C134 92 124 96 116 96 C106 96 98 90 96 78z" fill="#cfa597"/>
        <path d="M102 58 C102 50 130 50 132 58 L132 78 C126 88 108 88 102 78z" fill="#dbb8aa"/>
        <path d="M92 56 C90 36 100 27 116 27 C134 27 142 36 140 56 C136 42 126 38 116 38 C104 38 96 44 92 56z" fill="#343539"/>
        <path d="M102 64 h10 M122 64 h10" stroke="#5a4540" stroke-width="2"/>
        <path d="M110 86 h14" stroke="#9a6a66" stroke-width="1.5"/>
      </g>
    </svg>
<div class="a" style="left:1117px;top:375px;width:143px;height:19px;background:rgba(45,45,48,0.72);"></div><svg class="a" style="left:1120px;top:377px" width="15" height="15" viewBox="0 0 15 15">
      <path d="M5.8 3 a2 2 0 0 1 4 0 v4.5 a2 2 0 0 1 -4 0z" fill="#f0504a"/>
      <path d="M4.3 7 a3.5 3.5 0 0 0 7 0 M7.8 10.5 v2.5 M5.5 13.5 h5" fill="none" stroke="#f0504a" stroke-width="1.2"/>
      <path d="M1 14 l13 -13" stroke="#f0504a" stroke-width="1.4"/>
    </svg><div class="t" style="left:1139.30px;top:377.77px;font-size:13.5px;color:#ffffff;font-family:'Liberation Sans',sans-serif;transform:scaleX(0.9633);transform-origin:0 0;">Eduard Coropceanu</div>
<div class="a" style="left:1116px;top:395px;width:226px;height:128px;background:#8cc63f;"></div>
<svg class="a" style="left:1117px;top:396px" width="224" height="126" viewBox="0 0 224 126">
      <defs><filter id="d2" x="-20%" y="-20%" width="140%" height="140%"><feGaussianBlur stdDeviation="1.3"/></filter>
      <linearGradient id="g3" x1="0" y1="0" x2="0" y2="1"><stop offset="0" stop-color="#873626"/><stop offset="1" stop-color="#6e271c"/></linearGradient></defs>
      <rect width="224" height="60" fill="#e7e8e4"/>
      <rect y="58" width="224" height="68" fill="url(#g3)"/>
      <rect x="0" y="57" width="224" height="3" fill="#5a2a20"/>
      <g filter="url(#d2)">
        <rect x="156" y="2" width="26" height="36" fill="#d6dadc" stroke="#b8c4c8" stroke-width="1.5"/>
        <rect x="186" y="2" width="26" height="36" fill="#d0d6d6" stroke="#a8b8b8" stroke-width="1.5"/>
        <rect x="192" y="8" width="14" height="24" fill="#e8ece8"/>
        <rect x="215" y="2" width="12" height="36" fill="#d6dcdc" stroke="#a8b8b8" stroke-width="1.5"/>
        <rect x="36" y="60" width="2" height="66" fill="#6a2418"/>
        <rect x="187" y="60" width="2" height="66" fill="#6a2418"/>
        <path d="M54 126 C56 104 66 92 80 88 L88 126z" fill="#2a2a2e"/>
        <path d="M136 126 L140 80 C160 78 180 96 192 126z" fill="#232326"/>
        <path d="M70 56 C70 30 88 18 108 18 C130 18 146 32 146 56 L147 90 C142 110 132 126 124 126 L90 126 C80 110 72 92 70 56z" fill="#cc9a8e"/>
        <path d="M80 52 C82 32 96 24 110 24 C126 24 138 36 138 54 C126 46 94 46 80 52z" fill="#e4cac0"/>
        <path d="M68 72 C64 46 72 26 94 18 C112 12 134 16 143 30 C148 42 147 58 144 72 L140 64 C140 46 134 34 122 26 C108 22 92 24 82 36 C76 46 74 60 74 76z" fill="#5a504a"/>
        <path d="M143 72 C150 74 150 90 144 92z" fill="#c08a80"/>
        <path d="M80 68 h16 M108 66 h18" stroke="#6a4a44" stroke-width="2.5"/>
        <path d="M82 77 h12 M111 76 h13" stroke="#5a3a38" stroke-width="2.5"/>
        <path d="M100 84 L98 100 L106 101" fill="none" stroke="#b27a70" stroke-width="2"/>
        <path d="M94 113 h24" stroke="#8a5a55" stroke-width="3"/>
        <path d="M134 126 L137 108 L143 126z" fill="#dde0e8"/>
      </g>
    </svg>
<div class="a" style="left:1117px;top:503px;width:86px;height:19px;background:rgba(45,45,48,0.72);"></div><div class="t" style="left:1121.00px;top:505.77px;font-size:13.5px;color:#ffffff;font-family:'Liberation Sans',sans-serif;transform:scaleX(0.9625);transform-origin:0 0;">Aluchi Nicolai</div>
<svg class="a" style="left:1117px;top:524px" width="224" height="126" viewBox="0 0 224 126">
      <defs><filter id="e2" x="-20%" y="-20%" width="140%" height="140%"><feGaussianBlur stdDeviation="1.1"/></filter></defs>
      <rect width="224" height="126" fill="#fdfdfd"/>
      <g filter="url(#e2)">
        <path d="M57 0 L158 0 L153.5 8.5 L76 8.5 L76 80 C76 86 80 90 86 93 L115 106 L146.5 91 L166.7 104 L115 132 L70 108 C62 104 57 98 57 88 Z" fill="#172260"/>
        <rect x="97" y="21.5" width="41" height="10" fill="#172260"/>
        <path d="M100 100 L136 100 L138 126 L98 126z" fill="#c9a092"/>
        <path d="M88 126 C90 114 94 110 100 108 L106 126z" fill="#1d2850"/>
        <path d="M136 126 L139 114 C156 116 170 120 176 126z" fill="#1d2850"/>
        <path d="M131 110 L139 110 L138 126 L130 126z" fill="#e6eaf2"/>
        <path d="M87 46 C87 30 98 24 116 24 C136 24 148 34 148 52 L147 84 C144 100 130 110 116 110 C102 110 92 100 89 86z" fill="#d5ab9d"/>
        <path d="M96 74 C100 68 132 68 138 74 L136 92 C130 102 104 102 98 92z" fill="#e0bfb2"/>
        <path d="M82 70 C78 44 84 22 106 18 C128 14 148 24 152 46 C153 56 150 64 148 68 C146 56 142 46 134 40 C120 34 104 34 96 42 C90 48 86 58 85 72z" fill="#46342a"/>
        <path d="M96 42 C104 30 124 30 134 40 C120 38 106 40 96 52z" fill="#5a4434"/>
        <rect x="88" y="58" width="25" height="16" rx="6" fill="none" stroke="#2e1e1a" stroke-width="1.8"/>
        <rect x="117" y="57.5" width="24" height="16" rx="6" fill="none" stroke="#2e1e1a" stroke-width="1.8"/>
        <path d="M113 63 h4" stroke="#3a2420" stroke-width="2"/>
        <path d="M107 91 h18" stroke="#a86a66" stroke-width="2.2"/>
      </g>
    </svg>
<div class="a" style="left:1117px;top:631px;width:96px;height:19px;background:rgba(45,45,48,0.72);"></div><svg class="a" style="left:1120px;top:633px" width="15" height="15" viewBox="0 0 15 15">
      <path d="M5.8 3 a2 2 0 0 1 4 0 v4.5 a2 2 0 0 1 -4 0z" fill="#f0504a"/>
      <path d="M4.3 7 a3.5 3.5 0 0 0 7 0 M7.8 10.5 v2.5 M5.5 13.5 h5" fill="none" stroke="#f0504a" stroke-width="1.2"/>
      <path d="M1 14 l13 -13" stroke="#f0504a" stroke-width="1.4"/>
    </svg><div class="t" style="left:1139.50px;top:633.77px;font-size:13.5px;color:#ffffff;font-family:'Liberation Sans',sans-serif;transform:scaleX(0.9498);transform-origin:0 0;">Diana Antoci</div>
<div class="a" style="left:8px;top:8px;width:86px;height:24px;background:rgba(40,38,38,0.82);border-radius:6px"></div>
<div class="a" style="left:15.8px;top:15.8px;width:8.5px;height:8.5px;border-radius:50%;background:#e5262a"></div>
<div class="t" style="left:32.00px;top:14.40px;font-size:13px;color:#ffffff;font-family:'Liberation Sans',sans-serif;transform:scaleX(0.9113);transform-origin:0 0;">Recording</div></body></html>
